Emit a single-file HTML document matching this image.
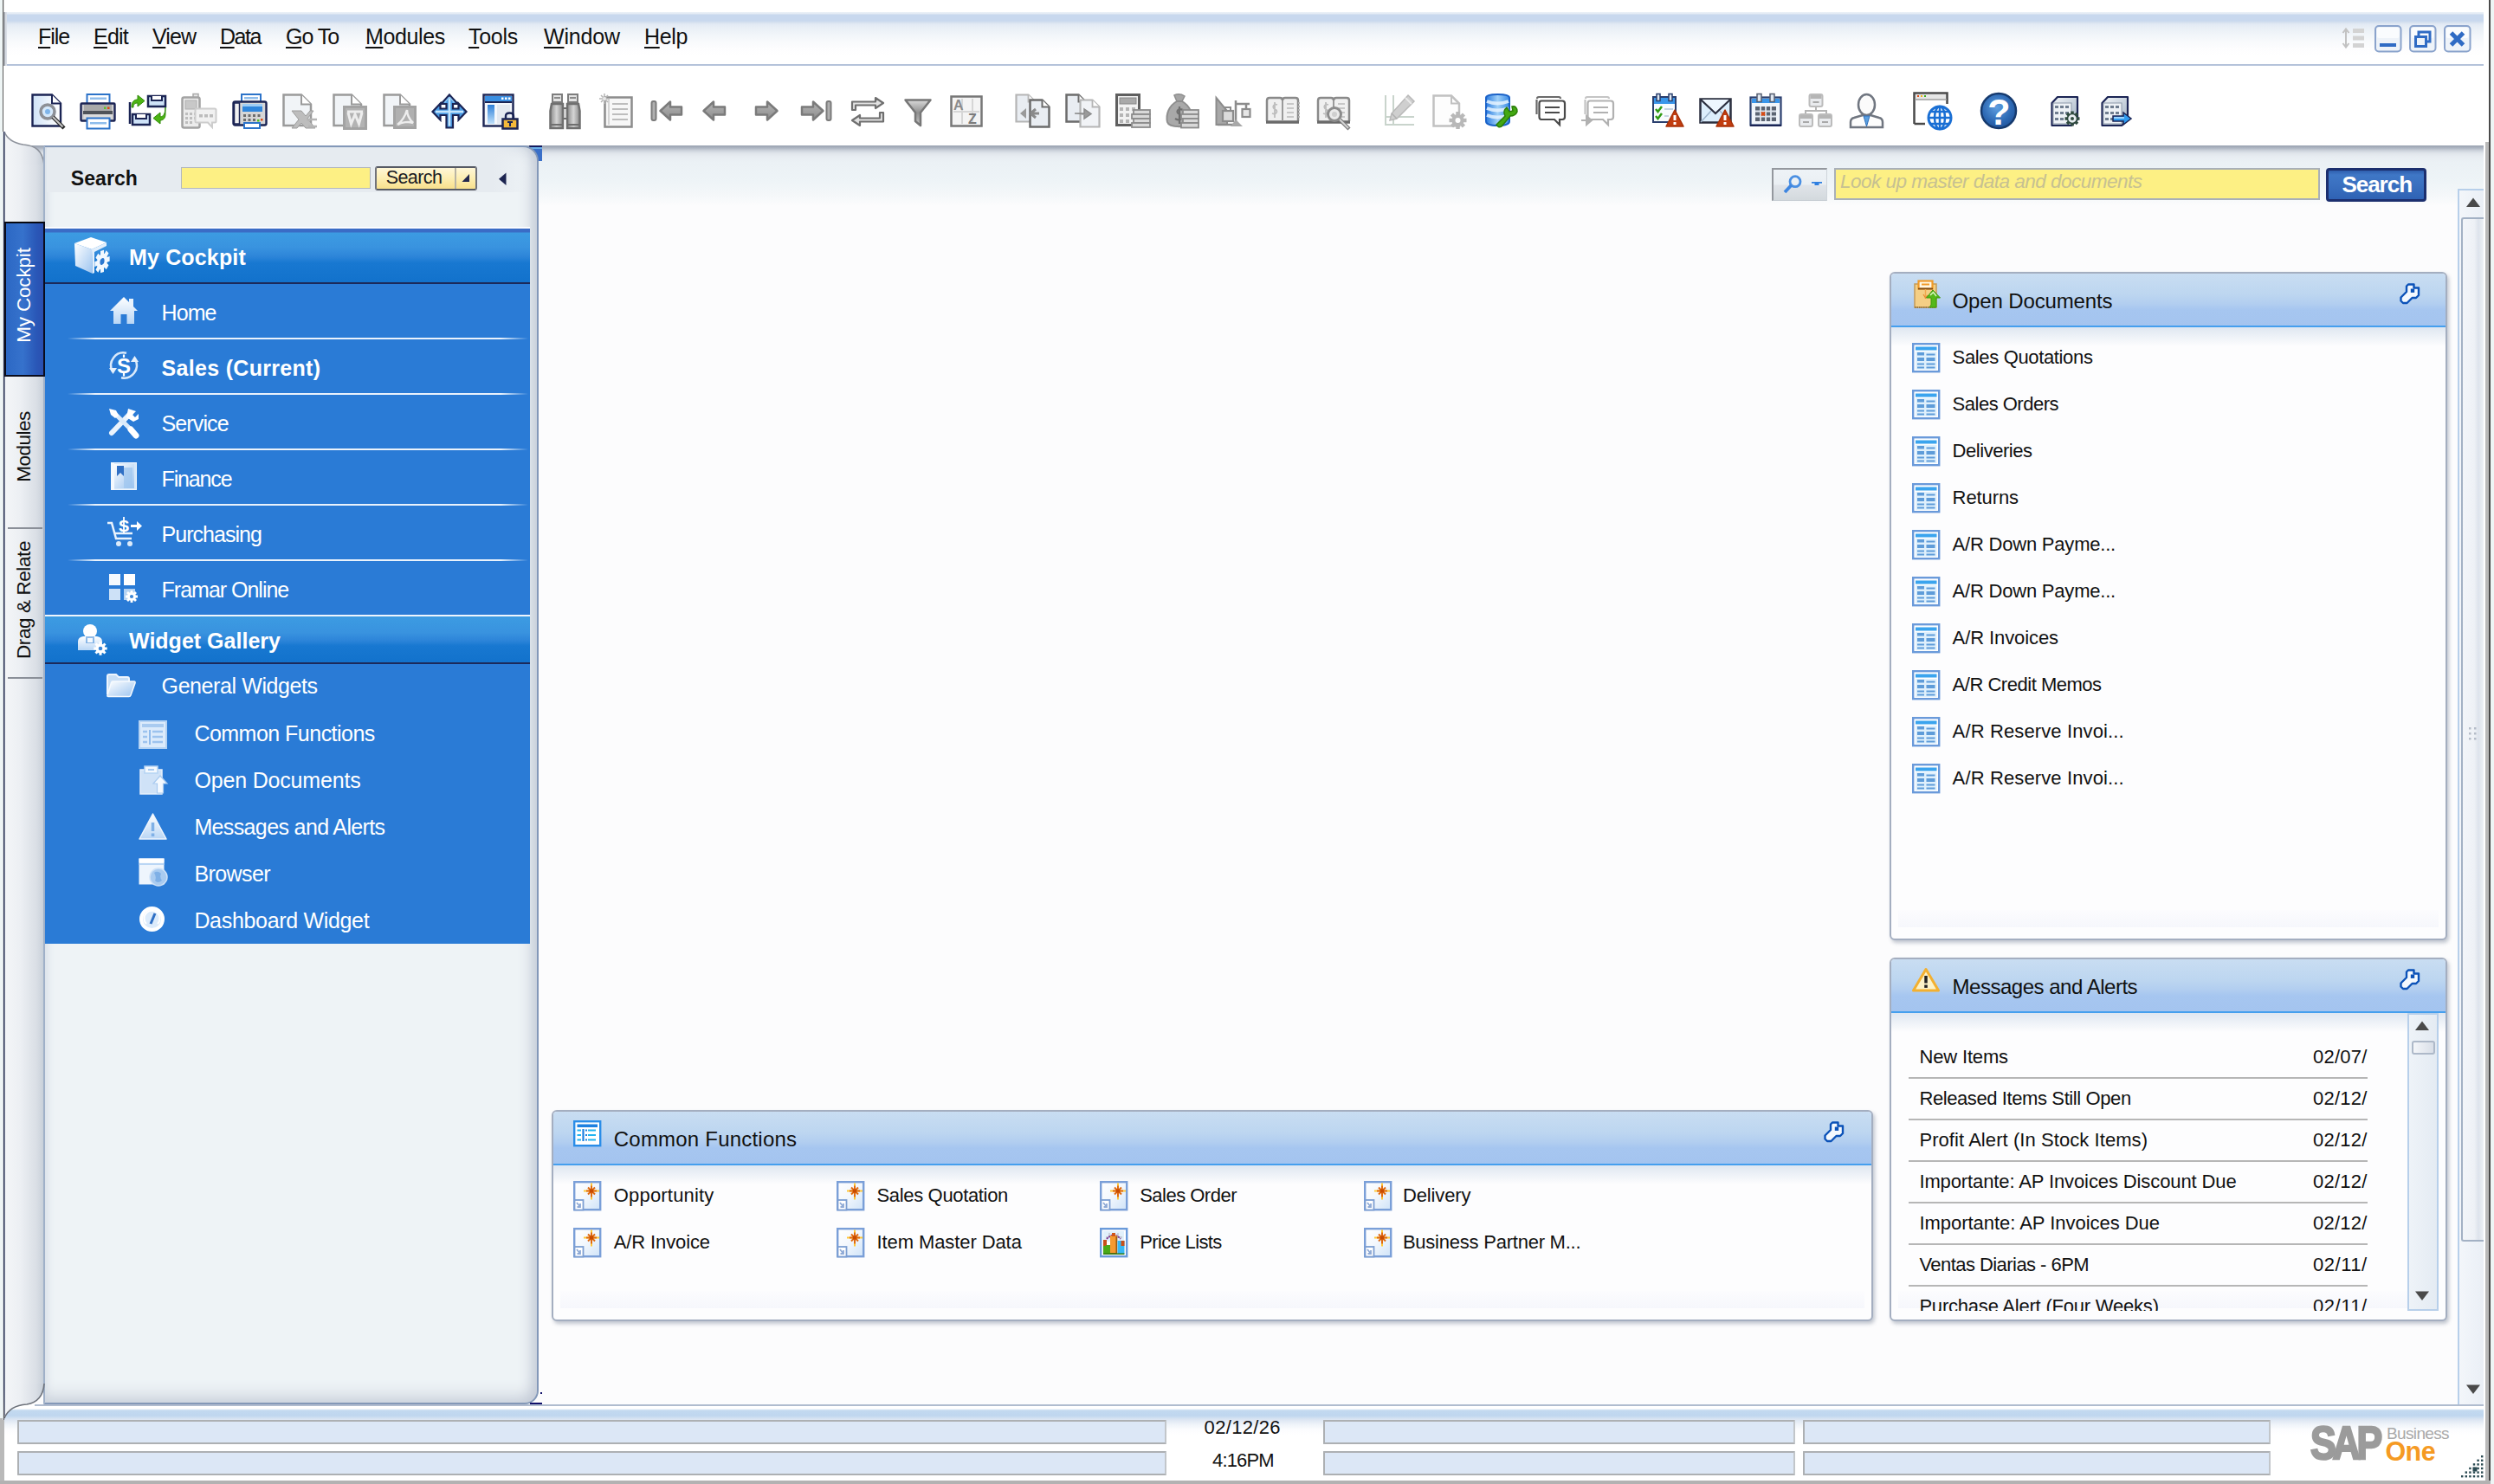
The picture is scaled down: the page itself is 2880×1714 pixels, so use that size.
<!DOCTYPE html>
<html><head><meta charset="utf-8"><title>SAP Business One</title>
<style>
html,body{margin:0;padding:0;}
body{width:2880px;height:1714px;overflow:hidden;background:#fff;position:relative;font-family:"Liberation Sans",sans-serif;}
.t{position:absolute;white-space:nowrap;}
svg{position:absolute;overflow:visible;}
u{text-decoration:underline;text-underline-offset:3px;text-decoration-thickness:2px;}
</style></head><body>
<div style="position:absolute;left:0px;top:14px;width:2880px;height:61px;background:linear-gradient(#eaf0f6 0px,#e2eaf4 2px,#c8d8ee 3px,#c8d8ee 10px,#d6e1ef 12px,#e3eaf4 14px,#e9eff6 18px,#f1f5f9 26px,#f8fafc 34px,#fdfdfe 42px,#fff 50px);"></div>
<div style="position:absolute;left:5px;top:74px;width:2863px;height:2px;background:#b5c3da;"></div>
<div style="position:absolute;left:0px;top:76px;width:2880px;height:92px;background:#fff;"></div>
<div style="position:absolute;left:4px;top:168px;width:2870px;height:1454px;background:#fcfcfd;"></div>
<div style="position:absolute;left:4px;top:168px;width:2864px;height:70px;background:linear-gradient(#98a1af 0px,#aeb6c3 3px,#cdd3dc 6px,#e0e5eb 9px,#e8edf2 13px,#ebf1f5 20px,#eef4f7 42px,#f4f7f9 56px,#fcfcfd 70px);"></div>
<div style="position:absolute;left:0px;top:0px;width:3px;height:1714px;background:#eef5f5;"></div>
<div style="position:absolute;left:4px;top:14px;width:2px;height:62px;background:#a2a6ad;"></div>
<div style="position:absolute;left:6px;top:14px;width:2px;height:62px;background:#d9dee6;"></div>
<div style="position:absolute;left:3px;top:0px;width:1px;height:153px;background:#5a5a5a;"></div>
<div style="position:absolute;left:4px;top:0px;width:1px;height:14px;background:#d8d8d8;"></div>
<div class="t" style="left:44px;top:25.5px;font-size:25px;line-height:32px;letter-spacing:-1.07px;color:#111;"><u>F</u>ile</div>
<div class="t" style="left:108px;top:25.5px;font-size:25px;line-height:32px;letter-spacing:-0.77px;color:#111;"><u>E</u>dit</div>
<div class="t" style="left:176px;top:25.5px;font-size:25px;line-height:32px;letter-spacing:-0.93px;color:#111;"><u>V</u>iew</div>
<div class="t" style="left:254px;top:25.5px;font-size:25px;line-height:32px;letter-spacing:-1.45px;color:#111;"><u>D</u>ata</div>
<div class="t" style="left:330px;top:25.5px;font-size:25px;line-height:32px;letter-spacing:-1.05px;color:#111;"><u>G</u>o To</div>
<div class="t" style="left:422px;top:25.5px;font-size:25px;line-height:32px;letter-spacing:-0.36px;color:#111;"><u>M</u>odules</div>
<div class="t" style="left:541px;top:25.5px;font-size:25px;line-height:32px;letter-spacing:-0.27px;color:#111;"><u>T</u>ools</div>
<div class="t" style="left:628px;top:25.5px;font-size:25px;line-height:32px;letter-spacing:-0.15px;color:#111;"><u>W</u>indow</div>
<div class="t" style="left:744px;top:25.5px;font-size:25px;line-height:32px;letter-spacing:-0.35px;color:#111;"><u>H</u>elp</div>
<div style="position:absolute;left:5px;top:188px;width:47px;height:1414px;background:linear-gradient(90deg,#f4f6f8 0%,#eceff3 40%,#d9dee5 80%,#c4ccd6 100%);"></div>
<svg width="0" height="0" style="position:absolute"><defs><linearGradient id="gCol" x1="0" y1="0" x2="1" y2="0"><stop offset="0" stop-color="#f4f6f8"/><stop offset=".4" stop-color="#eceff3"/><stop offset=".8" stop-color="#d9dee5"/><stop offset="1" stop-color="#c4ccd6"/></linearGradient></defs></svg>
<svg style="left:5px;top:150px" width="47" height="40" viewBox="0 0 47 40"><path d="M0 2 C3 10 9 15 22 17 C36 18 44 24 46 40 L0 40 Z" fill="url(#gCol)"/><path d="M0 2 C3 10 9 15 22 17 C36 18 44 24 46 40" fill="none" stroke="#8d929b" stroke-width="1.6"/></svg>
<div style="position:absolute;left:611px;top:168px;width:15px;height:18px;background:linear-gradient(#141a5e 0px,#141a5e 2px,#6ab0ea 2px,#6ab0ea 4px,#3a6fc8 4px);"></div>
<div style="position:absolute;left:50px;top:168px;width:572px;height:1454px;box-sizing:border-box;background:#eef3f6;border:2px solid #8398b8;border-left:2px solid #9fb0c8;border-radius:0 18px 16px 0;box-shadow:inset -14px 0 16px -8px #c3cad6, inset 0 -16px 18px -8px #ccd3dd, inset 0 12px 14px -6px #dfe5ec, inset 8px 0 10px -6px #dde3ea;"></div>
<div style="position:absolute;left:54px;top:171px;width:560px;height:51px;background:linear-gradient(90deg,#e6ebf0 0%,#e6ebf0 92%,rgba(230,235,240,0) 100%);border-radius:0 16px 0 0;"></div>
<div style="position:absolute;left:612px;top:1620px;width:14px;height:2px;background:#10106a;"></div>
<div style="position:absolute;left:624px;top:1608px;width:2px;height:2px;background:#10106a;"></div>
<div style="position:absolute;left:52px;top:264px;width:560px;height:826px;background:#2a7bd6;"></div>
<div style="position:absolute;left:52px;top:262px;width:560px;height:2px;background:#fbfcfe;"></div>
<div style="position:absolute;left:52px;top:264px;width:560px;height:64px;background:linear-gradient(#3a6cc6 0px,#3a6cc6 4px,#3c9be2 5px,#3993df 35%,#2d85d9 52%,#1878d1 64%,#1272cc 100%);border-bottom:2px solid #1c2a5a;box-sizing:border-box;"></div>
<div style="position:absolute;left:52px;top:710px;width:560px;height:2px;background:#eef5fd;"></div>
<div style="position:absolute;left:52px;top:712px;width:560px;height:55px;background:linear-gradient(#3c9be2 0px,#3993df 35%,#2d85d9 52%,#1878d1 64%,#1272cc 100%);border-bottom:2px solid #1c2a5a;box-sizing:border-box;"></div>
<div class="t " style="left:149.0px;top:281.0px;font-size:25px;line-height:32px;color:#fff;letter-spacing:0.16px;font-weight:bold;">My Cockpit</div>
<div class="t " style="left:149.0px;top:724.0px;font-size:25px;line-height:32px;color:#fff;letter-spacing:0.01px;font-weight:bold;">Widget Gallery</div>
<div class="t " style="left:186.6px;top:345.0px;font-size:25px;line-height:32px;color:#fff;letter-spacing:-0.95px;">Home</div>
<div style="position:absolute;left:78px;top:390px;width:532px;height:2px;background:linear-gradient(90deg,rgba(255,255,255,0) 0%,#e9f2fc 6%,#e9f2fc 94%,rgba(255,255,255,0) 100%);"></div>
<div class="t " style="left:186.6px;top:409.0px;font-size:25px;line-height:32px;color:#fff;letter-spacing:0.30px;font-weight:bold;">Sales (Current)</div>
<div style="position:absolute;left:78px;top:454px;width:532px;height:2px;background:linear-gradient(90deg,rgba(255,255,255,0) 0%,#e9f2fc 6%,#e9f2fc 94%,rgba(255,255,255,0) 100%);"></div>
<div class="t " style="left:186.6px;top:473.0px;font-size:25px;line-height:32px;color:#fff;letter-spacing:-0.90px;">Service</div>
<div style="position:absolute;left:78px;top:518px;width:532px;height:2px;background:linear-gradient(90deg,rgba(255,255,255,0) 0%,#e9f2fc 6%,#e9f2fc 94%,rgba(255,255,255,0) 100%);"></div>
<div class="t " style="left:186.6px;top:537.0px;font-size:25px;line-height:32px;color:#fff;letter-spacing:-1.16px;">Finance</div>
<div style="position:absolute;left:78px;top:582px;width:532px;height:2px;background:linear-gradient(90deg,rgba(255,255,255,0) 0%,#e9f2fc 6%,#e9f2fc 94%,rgba(255,255,255,0) 100%);"></div>
<div class="t " style="left:186.6px;top:601.0px;font-size:25px;line-height:32px;color:#fff;letter-spacing:-0.97px;">Purchasing</div>
<div style="position:absolute;left:78px;top:646px;width:532px;height:2px;background:linear-gradient(90deg,rgba(255,255,255,0) 0%,#e9f2fc 6%,#e9f2fc 94%,rgba(255,255,255,0) 100%);"></div>
<div class="t " style="left:186.6px;top:665.0px;font-size:25px;line-height:32px;color:#fff;letter-spacing:-1.01px;">Framar Online</div>
<div class="t " style="left:186.6px;top:776.0px;font-size:25px;line-height:32px;color:#fff;letter-spacing:-0.41px;">General Widgets</div>
<div class="t " style="left:224.4px;top:830.5px;font-size:25px;line-height:32px;color:#fff;letter-spacing:-0.52px;">Common Functions</div>
<div class="t " style="left:224.4px;top:884.5px;font-size:25px;line-height:32px;color:#fff;letter-spacing:-0.17px;">Open Documents</div>
<div class="t " style="left:224.4px;top:938.5px;font-size:25px;line-height:32px;color:#fff;letter-spacing:-0.63px;">Messages and Alerts</div>
<div class="t " style="left:224.4px;top:992.5px;font-size:25px;line-height:32px;color:#fff;letter-spacing:-0.58px;">Browser</div>
<div class="t " style="left:224.4px;top:1046.5px;font-size:25px;line-height:32px;color:#fff;letter-spacing:-0.32px;">Dashboard Widget</div>
<div class="t " style="left:81.8px;top:191.0px;font-size:23px;line-height:30px;color:#111;letter-spacing:0.08px;font-weight:bold;">Search</div>
<div style="position:absolute;left:209px;top:193px;width:219px;height:25px;background:#fdf084;border:1.500px solid #b3b8be;box-sizing:border-box;"></div>
<div style="position:absolute;left:433px;top:192px;width:118px;height:28px;background:linear-gradient(#fff7d8,#fdeeb2 50%,#f8e08c);border:2px solid #70727a;border-top-color:#565a64;border-bottom-color:#565a64;border-radius:3px;box-sizing:border-box;"></div>
<div style="position:absolute;left:525px;top:194px;width:2px;height:24px;background:#b9b4a4;"></div>
<div class="t " style="left:445.7px;top:190.5px;font-size:21.5px;line-height:28px;color:#1a1a22;letter-spacing:-0.59px;">Search</div>
<svg style="left:533px;top:200px" width="10" height="11"><path d="M9 1 L9 10 L0.500 10 Z" fill="#23284e"/></svg>
<svg style="left:575px;top:199px" width="10" height="16"><path d="M9.500 0.500 L9.500 15 L1 7.700 Z" fill="#1c2450"/></svg>
<div style="position:absolute;left:5px;top:256px;width:47px;height:179px;background:linear-gradient(90deg,#2c68c4,#3672cc 45%,#2a58b8 80%,#2a4fb0);border:2px solid #0a0c1c;border-top:2.500px solid #07080f;box-sizing:border-box;"></div>
<div class="t" style="left:28px;top:340.5px;width:0;height:0;"><div style="position:absolute;white-space:nowrap;transform:translate(-50%,-50%) rotate(-90deg);font-size:22.5px;line-height:26px;color:#fff;letter-spacing:-0.18px;">My Cockpit</div></div>
<div class="t" style="left:28px;top:516px;width:0;height:0;"><div style="position:absolute;white-space:nowrap;transform:translate(-50%,-50%) rotate(-90deg);font-size:22.5px;line-height:26px;color:#111;letter-spacing:-0.51px;">Modules</div></div>
<div class="t" style="left:28px;top:693.4px;width:0;height:0;"><div style="position:absolute;white-space:nowrap;transform:translate(-50%,-50%) rotate(-90deg);font-size:22.5px;line-height:26px;color:#111;letter-spacing:-0.41px;">Drag &amp; Relate</div></div>
<div style="position:absolute;left:9px;top:609px;width:40px;height:2px;background:#8a8f98;"></div>
<div style="position:absolute;left:9px;top:782px;width:40px;height:2px;background:#8a8f98;"></div>
<div style="position:absolute;left:2182px;top:314px;width:644px;height:772px;background:#fdfdfe;border:2px solid #a4aec0;border-radius:6px;box-sizing:border-box;box-shadow:2px 3px 4px rgba(120,130,150,.45);overflow:hidden;"><div style="position:absolute;left:0;top:0;right:0;height:62px;background:linear-gradient(#c9ddf2 0%,#bdd6f0 40%,#b2cef0 58%,#a6c6f0 70%,#a4c4ef 100%);border-bottom:2px solid #459fee;box-sizing:border-box;"></div><div style="position:absolute;left:0;top:62px;right:0;height:22px;background:linear-gradient(#dfe7f1,#fdfdfe);"></div><div style="position:absolute;left:8px;right:8px;bottom:13px;height:20px;background:linear-gradient(#fcfcfe,#f6f7fc);"></div></div>
<div class="t " style="left:2254.6px;top:332.0px;font-size:24px;line-height:31px;color:#111;letter-spacing:-0.14px;">Open Documents</div>
<div style="position:absolute;left:2182px;top:1106px;width:644px;height:420px;background:#fdfdfe;border:2px solid #a4aec0;border-radius:6px;box-sizing:border-box;box-shadow:2px 3px 4px rgba(120,130,150,.45);overflow:hidden;"><div style="position:absolute;left:0;top:0;right:0;height:62px;background:linear-gradient(#c9ddf2 0%,#bdd6f0 40%,#b2cef0 58%,#a6c6f0 70%,#a4c4ef 100%);border-bottom:2px solid #459fee;box-sizing:border-box;"></div><div style="position:absolute;left:0;top:62px;right:0;height:22px;background:linear-gradient(#dfe7f1,#fdfdfe);"></div><div style="position:absolute;left:8px;right:8px;bottom:13px;height:20px;background:linear-gradient(#fcfcfe,#f6f7fc);"></div></div>
<div class="t " style="left:2254.6px;top:1124.0px;font-size:24px;line-height:31px;color:#111;letter-spacing:-0.49px;">Messages and Alerts</div>
<div style="position:absolute;left:637px;top:1282px;width:1526px;height:244px;background:#fdfdfe;border:2px solid #a4aec0;border-radius:6px;box-sizing:border-box;box-shadow:2px 3px 4px rgba(120,130,150,.45);overflow:hidden;"><div style="position:absolute;left:0;top:0;right:0;height:62px;background:linear-gradient(#c9ddf2 0%,#bdd6f0 40%,#b2cef0 58%,#a6c6f0 70%,#a4c4ef 100%);border-bottom:2px solid #459fee;box-sizing:border-box;"></div><div style="position:absolute;left:0;top:62px;right:0;height:22px;background:linear-gradient(#dfe7f1,#fdfdfe);"></div><div style="position:absolute;left:8px;right:8px;bottom:13px;height:20px;background:linear-gradient(#fcfcfe,#f6f7fc);"></div></div>
<div class="t " style="left:708.8px;top:1300.0px;font-size:24px;line-height:31px;color:#111;letter-spacing:0.21px;">Common Functions</div>
<div class="t " style="left:2254.6px;top:397.5px;font-size:22px;line-height:29px;color:#111;letter-spacing:-0.35px;">Sales Quotations</div>
<div class="t " style="left:2254.6px;top:451.5px;font-size:22px;line-height:29px;color:#111;letter-spacing:-0.50px;">Sales Orders</div>
<div class="t " style="left:2254.6px;top:505.5px;font-size:22px;line-height:29px;color:#111;letter-spacing:-0.46px;">Deliveries</div>
<div class="t " style="left:2254.6px;top:559.5px;font-size:22px;line-height:29px;color:#111;letter-spacing:-0.09px;">Returns</div>
<div class="t " style="left:2254.6px;top:613.5px;font-size:22px;line-height:29px;color:#111;letter-spacing:-0.21px;">A/R Down Payme...</div>
<div class="t " style="left:2254.6px;top:667.5px;font-size:22px;line-height:29px;color:#111;letter-spacing:-0.21px;">A/R Down Payme...</div>
<div class="t " style="left:2254.6px;top:721.5px;font-size:22px;line-height:29px;color:#111;letter-spacing:-0.09px;">A/R Invoices</div>
<div class="t " style="left:2254.6px;top:775.5px;font-size:22px;line-height:29px;color:#111;letter-spacing:-0.48px;">A/R Credit Memos</div>
<div class="t " style="left:2254.6px;top:829.5px;font-size:22px;line-height:29px;color:#111;letter-spacing:0.13px;">A/R Reserve Invoi...</div>
<div class="t " style="left:2254.6px;top:883.5px;font-size:22px;line-height:29px;color:#111;letter-spacing:0.13px;">A/R Reserve Invoi...</div>
<div style="position:absolute;left:2184px;top:1170px;width:596px;height:344px;overflow:hidden;">
<div class="t" style="left:32.4px;top:36px;font-size:22px;line-height:30px;letter-spacing:-0.15px;color:#111;">New Items</div>
<div class="t" style="left:487px;top:36px;font-size:22px;line-height:30px;letter-spacing:0.26px;color:#111;">02/07/</div>
<div style="position:absolute;left:20px;top:74px;width:530px;height:2px;background:#b6b6b6;"></div>
<div class="t" style="left:32.4px;top:84px;font-size:22px;line-height:30px;letter-spacing:-0.40px;color:#111;">Released Items Still Open</div>
<div class="t" style="left:487px;top:84px;font-size:22px;line-height:30px;letter-spacing:0.26px;color:#111;">02/12/</div>
<div style="position:absolute;left:20px;top:122px;width:530px;height:2px;background:#b6b6b6;"></div>
<div class="t" style="left:32.4px;top:132px;font-size:22px;line-height:30px;letter-spacing:0.07px;color:#111;">Profit Alert (In Stock Items)</div>
<div class="t" style="left:487px;top:132px;font-size:22px;line-height:30px;letter-spacing:0.26px;color:#111;">02/12/</div>
<div style="position:absolute;left:20px;top:170px;width:530px;height:2px;background:#b6b6b6;"></div>
<div class="t" style="left:32.4px;top:180px;font-size:22px;line-height:30px;letter-spacing:-0.11px;color:#111;">Importante: AP Invoices Discount Due</div>
<div class="t" style="left:487px;top:180px;font-size:22px;line-height:30px;letter-spacing:0.26px;color:#111;">02/12/</div>
<div style="position:absolute;left:20px;top:218px;width:530px;height:2px;background:#b6b6b6;"></div>
<div class="t" style="left:32.4px;top:228px;font-size:22px;line-height:30px;letter-spacing:-0.03px;color:#111;">Importante: AP Invoices Due</div>
<div class="t" style="left:487px;top:228px;font-size:22px;line-height:30px;letter-spacing:0.26px;color:#111;">02/12/</div>
<div style="position:absolute;left:20px;top:266px;width:530px;height:2px;background:#b6b6b6;"></div>
<div class="t" style="left:32.4px;top:276px;font-size:22px;line-height:30px;letter-spacing:-0.55px;color:#111;">Ventas Diarias - 6PM</div>
<div class="t" style="left:487px;top:276px;font-size:22px;line-height:30px;letter-spacing:0.53px;color:#111;">02/11/</div>
<div style="position:absolute;left:20px;top:314px;width:530px;height:2px;background:#b6b6b6;"></div>
<div class="t" style="left:32.4px;top:324px;font-size:22px;line-height:30px;letter-spacing:-0.21px;color:#111;">Purchase Alert (Four Weeks)</div>
<div class="t" style="left:487px;top:324px;font-size:22px;line-height:30px;letter-spacing:0.53px;color:#111;">02/11/</div>
</div>
<div style="position:absolute;left:2780px;top:1170px;width:36px;height:344px;background:linear-gradient(90deg,#eef3f8,#e4ebf3);border:2px solid #b7cfea;box-sizing:border-box;"></div>
<div style="position:absolute;left:2785px;top:1202px;width:27px;height:16px;background:linear-gradient(90deg,#f4f6f9,#d9dfe8);border:2px solid #aeb9c9;border-radius:3px;box-sizing:border-box;"></div>
<svg style="left:2789px;top:1179px" width="16" height="12"><path d="M8 0.500 L16 11 L0 11 Z" fill="#4a4a4a"/></svg>
<svg style="left:2789px;top:1491px" width="16" height="12"><path d="M0 0.500 L16 0.500 L8 11 Z" fill="#4a4a4a"/></svg>
<div class="t " style="left:708.8px;top:1365.5px;font-size:22px;line-height:29px;color:#111;letter-spacing:0.18px;">Opportunity</div>
<div class="t " style="left:1012.5px;top:1365.5px;font-size:22px;line-height:29px;color:#111;letter-spacing:-0.34px;">Sales Quotation</div>
<div class="t " style="left:1316.2px;top:1365.5px;font-size:22px;line-height:29px;color:#111;letter-spacing:-0.51px;">Sales Order</div>
<div class="t " style="left:1619.9px;top:1365.5px;font-size:22px;line-height:29px;color:#111;letter-spacing:-0.12px;">Delivery</div>
<div class="t " style="left:708.8px;top:1419.5px;font-size:22px;line-height:29px;color:#111;letter-spacing:-0.12px;">A/R Invoice</div>
<div class="t " style="left:1012.5px;top:1419.5px;font-size:22px;line-height:29px;color:#111;letter-spacing:-0.09px;">Item Master Data</div>
<div class="t " style="left:1316.2px;top:1419.5px;font-size:22px;line-height:29px;color:#111;letter-spacing:-0.64px;">Price Lists</div>
<div class="t " style="left:1619.9px;top:1419.5px;font-size:22px;line-height:29px;color:#111;letter-spacing:-0.23px;">Business Partner M...</div>
<div style="position:absolute;left:2046px;top:194px;width:64px;height:38px;background:linear-gradient(#eef3f7 0%,#eaeff3 48%,#e0e4e9 52%,#d3d9dd 100%);border-top:2px solid #94989e;border-left:2px solid #94989e;border-right:1px solid #cfd5db;border-bottom:1px solid #c5cbd2;box-sizing:border-box;"></div>
<div style="position:absolute;left:2118px;top:194px;width:561px;height:37px;background:#fdf084;border:2px solid #a9b0b8;box-sizing:border-box;"></div>
<div class="t " style="left:2125.0px;top:194.5px;font-size:22.5px;line-height:29px;color:#c6c092;letter-spacing:-0.51px;font-style:italic;">Look up master data and documents</div>
<div style="position:absolute;left:2686px;top:194px;width:116px;height:39px;background:linear-gradient(#2f5fae 0,#3f77c6 5px,#3a70c0 50%,#2f62b4 100%);border:3px solid #1c2f6e;border-radius:4px;box-sizing:border-box;"></div>
<div class="t " style="left:2704.4px;top:196.0px;font-size:26px;line-height:34px;color:#fff;letter-spacing:-1.02px;font-weight:bold;">Search</div>
<div style="position:absolute;left:2838px;top:218px;width:30px;height:1404px;background:linear-gradient(90deg,#f3f6fa,#eaeff6);border-left:2px solid #b7cfea;border-top:2px solid #b7cfea;box-sizing:border-box;"></div>
<div style="position:absolute;left:2842px;top:251px;width:26px;height:1183px;background:linear-gradient(90deg,#f2f5f9,#eef1f6 55%,#dde3ec 75%,#eef1f6);border:2px solid #a3b1c4;border-right:0;border-radius:3px 0 0 3px;box-sizing:border-box;"></div>
<svg style="left:2848px;top:228px" width="16" height="12"><path d="M8 0.500 L16 11 L0 11 Z" fill="#4a4a4a"/></svg>
<svg style="left:2848px;top:1599px" width="16" height="12"><path d="M0 0.500 L16 0.500 L8 11 Z" fill="#4a4a4a"/></svg>
<div style="position:absolute;left:5px;top:1623px;width:2875px;height:87px;background:linear-gradient(#fff 0px,#fff 4px,#c3d9f0 6px,#bfd6ef 12px,#d9e4f2 16px,#eef3f9 22px,#fbfcfe 28px,#fff 34px);"></div>
<div style="position:absolute;left:40px;top:1622px;width:2828px;height:2px;background:#b0bccf;"></div>
<div style="position:absolute;left:20px;top:1640px;width:1327px;height:28px;background:#dce7f6;border:2px solid #adb0b3;border-right-color:#c2c6ca;border-radius:1px;box-sizing:border-box;"></div>
<div style="position:absolute;left:1528px;top:1640px;width:545px;height:28px;background:#dce7f6;border:2px solid #adb0b3;border-right-color:#c2c6ca;border-radius:1px;box-sizing:border-box;"></div>
<div style="position:absolute;left:2082px;top:1640px;width:540px;height:28px;background:#dce7f6;border:2px solid #adb0b3;border-right-color:#c2c6ca;border-radius:1px;box-sizing:border-box;"></div>
<div style="position:absolute;left:20px;top:1676px;width:1327px;height:28px;background:#dce7f6;border:2px solid #adb0b3;border-right-color:#c2c6ca;border-radius:1px;box-sizing:border-box;"></div>
<div style="position:absolute;left:1528px;top:1676px;width:545px;height:28px;background:#dce7f6;border:2px solid #adb0b3;border-right-color:#c2c6ca;border-radius:1px;box-sizing:border-box;"></div>
<div style="position:absolute;left:2082px;top:1676px;width:540px;height:28px;background:#dce7f6;border:2px solid #adb0b3;border-right-color:#c2c6ca;border-radius:1px;box-sizing:border-box;"></div>
<div class="t " style="left:1390.6px;top:1634.0px;font-size:22px;line-height:29px;color:#111;letter-spacing:0.32px;">02/12/26</div>
<div class="t " style="left:1400.0px;top:1671.5px;font-size:22px;line-height:29px;color:#111;letter-spacing:-0.85px;">4:16PM</div>
<div style="position:absolute;left:0px;top:1638px;width:5px;height:76px;background:#b9b9b9;"></div>
<svg width="0" height="0" style="position:absolute"><defs>
<linearGradient id="gPaper" x1="0" y1="0" x2="1" y2="0"><stop offset="0" stop-color="#cfe2f7"/><stop offset=".6" stop-color="#eef5fc"/><stop offset="1" stop-color="#fff"/></linearGradient>
<linearGradient id="gBlueV" x1="0" y1="0" x2="0" y2="1"><stop offset="0" stop-color="#2e7fd8"/><stop offset="1" stop-color="#bfe0fa"/></linearGradient>
<linearGradient id="gGreyV" x1="0" y1="0" x2="0" y2="1"><stop offset="0" stop-color="#d9d9d9"/><stop offset=".5" stop-color="#8f8f8f"/><stop offset="1" stop-color="#c5c5c5"/></linearGradient>
<linearGradient id="gGreyH" x1="0" y1="0" x2="1" y2="0"><stop offset="0" stop-color="#8a8a8a"/><stop offset=".5" stop-color="#d5d5d5"/><stop offset="1" stop-color="#8a8a8a"/></linearGradient>
<linearGradient id="gArrow" x1="0" y1="0" x2="0" y2="1"><stop offset="0" stop-color="#b5b5b5"/><stop offset="1" stop-color="#8c8c8c"/></linearGradient>
<radialGradient id="gHelp" cx=".45" cy=".4" r=".7"><stop offset="0" stop-color="#5f9fe0"/><stop offset=".6" stop-color="#2d69b4"/><stop offset="1" stop-color="#1c4c92"/></radialGradient>
<linearGradient id="gDb" x1="0" y1="0" x2="1" y2="0"><stop offset="0" stop-color="#2a7be0"/><stop offset=".5" stop-color="#9fd0f8"/><stop offset="1" stop-color="#3a8be6"/></linearGradient>
<linearGradient id="gGrid" x1="0" y1="0" x2="1" y2="1"><stop offset="0" stop-color="#f4f7fa"/><stop offset="1" stop-color="#9fb0c2"/></linearGradient>
</defs></svg>
<svg style="left:36px;top:108px" width="42" height="42" viewBox="0 0 42 42" ><path d="M1.5 1.5 H24 L34 11.5 V37.5 H1.5 Z" fill="url(#gPaper)" stroke="#1b2454" stroke-width="2.400"/>
<path d="M24 1.5 V11.5 H34" fill="#fff" stroke="#1b2454" stroke-width="2"/>
<circle cx="19" cy="21" r="8" fill="#d5e9fb" stroke="#8d9096" stroke-width="3.5"/><circle cx="19" cy="21" r="3" fill="#7fb5ea"/>
<path d="M25 27 L38 40" stroke="#2a2a2a" stroke-width="4.5"/><path d="M25 27 L36.5 38.5" stroke="#c8c8c8" stroke-width="2"/></svg>
<svg style="left:92px;top:108px" width="42" height="42" viewBox="0 0 42 42" ><rect x="8.5" y="1" width="26" height="13" fill="#fff" stroke="#2c73c9" stroke-width="2"/><rect x="12" y="4.5" width="19" height="2.5" fill="#8fbdec"/>
<rect x="1.5" y="11.5" width="39" height="20" rx="1" fill="#cfcfcf" stroke="#1b2454" stroke-width="2.400"/>
<rect x="5" y="13" width="32" height="7" fill="#a9a9a9"/><rect x="4" y="20" width="34" height="4" fill="#4f5359"/><rect x="5" y="24" width="32" height="5" fill="#dcdcdc"/>
<rect x="28" y="15.5" width="2.5" height="2.5" fill="#5fc22a"/><rect x="32" y="15.5" width="2.5" height="2.5" fill="#e04a10"/>
<rect x="8.5" y="28.5" width="26" height="12" fill="#fff" stroke="#2c73c9" stroke-width="2"/><rect x="12" y="33" width="19" height="2.5" fill="#8fbdec"/></svg>
<svg style="left:148px;top:108px" width="44" height="42" viewBox="0 0 44 42" ><path d="M23 3 h20 v12 h-20 Z" fill="#cfe3f8" stroke="#1b2454" stroke-width="2.5"/><path d="M27 3 v5 h12 v-5" fill="#fff" stroke="#1b2454" stroke-width="2"/><path d="M5 24 h20 v12 h-20 Z" fill="#cfe3f8" stroke="#1b2454" stroke-width="2.5"/><path d="M9 24 v5 h12 v-5" fill="#fff" stroke="#1b2454" stroke-width="2"/><path d="M2 35 V10" stroke="#1b2454" stroke-width="2.5" fill="none"/>
<path d="M4 16 C4 8 8 7 11 7 V2 L19 8.5 L11 15 V11 C8 11 6 12 6 16 Z" fill="#4db414" stroke="#2f8a08" stroke-width="1"/>
<path d="M43 16 C43 24 40 27 37 27 V22 L29 28.5 L37 35 V31 C40 31 43 29 43 24 Z" fill="#4db414" stroke="#2f8a08" stroke-width="1"/></svg>
<svg style="left:208px;top:108px" width="42" height="42" viewBox="0 0 42 42" ><rect x="15" y="0.5" width="6" height="6" fill="#e6e6e6" stroke="#a9a9a9" stroke-width="1.5"/>
<rect x="2.500" y="4.500" width="20" height="35" rx="2" fill="#ececec" stroke="#a3a3a3" stroke-width="2.500"/>
<rect x="6" y="8" width="13" height="10" fill="#c8c8c8" stroke="#b0b0b0"/>
<g fill="#bdbdbd"><rect x="6" y="22" width="3" height="3"/><rect x="11" y="22" width="3" height="3"/><rect x="16" y="22" width="3" height="3"/><rect x="6" y="27" width="3" height="3"/><rect x="11" y="27" width="3" height="3"/><rect x="16" y="27" width="3" height="3"/><rect x="6" y="32" width="3" height="3"/><rect x="11" y="32" width="3" height="3"/></g>
<path d="M19 17.500 H40 Q41.500 17.500 41.500 19 V32 Q41.500 33.500 40 33.500 H37 V39 L32 33.500 H19 Q17.500 33.500 17.500 32 V19 Q17.500 17.500 19 17.500 Z" fill="#f1f1f1" stroke="#cdcdcd" stroke-width="2"/>
<g fill="#bcbcbc"><rect x="22" y="24" width="4" height="3.500"/><rect x="28" y="24" width="4" height="3.500"/><rect x="34" y="24" width="4" height="3.500"/></g></svg>
<svg style="left:266px;top:108px" width="44" height="42" viewBox="0 0 44 42" ><rect x="13" y="1" width="22" height="10" fill="#fff" stroke="#2c73c9" stroke-width="2"/><rect x="16" y="4" width="16" height="2.5" fill="#8fbdec"/>
<rect x="3.5" y="9.500" width="38" height="27" rx="2" fill="#d6d6d6" stroke="#1b2454" stroke-width="2.400"/>
<rect x="4.500" y="11" width="6" height="24" fill="#f2f2f2" stroke="#1b2454" stroke-width="1.500"/>
<rect x="14" y="12" width="23" height="9" fill="#2f86dc"/><rect x="14" y="12" width="23" height="3" fill="#9fcdf5"/>
<g fill="#6c6c6c"><rect x="15" y="24" width="3" height="3"/><rect x="20.500" y="24" width="3" height="3"/><rect x="26" y="24" width="3" height="3"/><rect x="31.500" y="24" width="3" height="3"/><rect x="15" y="29" width="3" height="3"/><rect x="20.500" y="29" width="3" height="3"/><rect x="26" y="29" width="3" height="3"/></g>
<rect x="31" y="30" width="2.500" height="2.500" fill="#4fc020"/><rect x="35" y="29" width="2.500" height="2.500" fill="#e04a10"/>
<rect x="16" y="34" width="18" height="6" fill="#fff" stroke="#2c73c9" stroke-width="2"/></svg>
<svg style="left:326px;top:108px" width="42" height="42" viewBox="0 0 42 42" ><path d="M1.5 1.5 H22 L33 12.5 V37 H1.5 Z" fill="#f1f4f7" stroke="#9a9a9a" stroke-width="2.5"/><path d="M22 1.5 V12.5 H33" fill="#fff" stroke="#9a9a9a" stroke-width="2"/><path d="M11 20 H22 L27 26 L32 20 H36 L29 29 L38 40 H27 L22 34 L17 40 H11 L19 30 Z" fill="#bdbdbd" stroke="#9d9d9d" stroke-width="1"/><path d="M28 30 H40 M30 38 H40" stroke="#b5b5b5" stroke-width="2.500"/></svg>
<svg style="left:384px;top:108px" width="42" height="42" viewBox="0 0 42 42" ><path d="M1.5 1.5 H22 L33 12.5 V37 H1.5 Z" fill="#f1f4f7" stroke="#9a9a9a" stroke-width="2.5"/><path d="M22 1.5 V12.5 H33" fill="#fff" stroke="#9a9a9a" stroke-width="2"/><rect x="13.500" y="15.500" width="25" height="25" fill="#b3b3b3" stroke="#a3a3a3" stroke-width="3"/>
<path d="M17 21 H35 M18 22 L21.500 35 L26 24 L30.500 35 L34 22" fill="none" stroke="#ededed" stroke-width="3"/></svg>
<svg style="left:442px;top:108px" width="40" height="42" viewBox="0 0 40 42" ><path d="M1.5 1.5 H20 L31 12.5 V37 H1.5 Z" fill="#f1f4f7" stroke="#9a9a9a" stroke-width="2.5"/><path d="M20 1.5 V12.5 H31" fill="#fff" stroke="#9a9a9a" stroke-width="2"/><rect x="13.500" y="15.500" width="24" height="24" fill="#b0b0b0" stroke="#a3a3a3" stroke-width="3"/>
<path d="M28 19 C26 26 22 32 17 36 C22 33 30 32 35 34 C31 30 28 25 28 19 Z" fill="none" stroke="#ededed" stroke-width="2.500"/></svg>
<svg style="left:498px;top:108px" width="42" height="42" viewBox="0 0 42 42" ><path d="M21 1.500 L30.500 12 H25 V17.500 H31.500 V11.500 L40.500 21 L31.500 30.500 V25 H25 V39.500 H17.500 V25 H10.500 V30.500 L1.500 21 L10.500 11.500 V17.500 H17.500 V12 H11.500 Z" fill="#4b9be4" stroke="#1b2454" stroke-width="2.200" stroke-linejoin="miter"/>
<path d="M21 5 V37.500 M5 21 H37" stroke="#c6e5fb" stroke-width="2.500"/><path d="M21 4 L26.500 10.500 M21 4 L15.500 10.500" stroke="#8cc4f2" stroke-width="1.500"/></svg>
<svg style="left:556px;top:108px" width="44" height="42" viewBox="0 0 44 42" ><rect x="2.500" y="1.500" width="34" height="36" fill="#f4f7fb" stroke="#1b2454" stroke-width="2.400"/>
<rect x="4" y="3" width="31" height="6" fill="#3a8fe2"/><rect x="4" y="9" width="31" height="2" fill="#1b2454"/>
<g fill="#fff"><rect x="23" y="4.500" width="2.500" height="2.500"/><rect x="27" y="4.500" width="2.500" height="2.500"/><rect x="31" y="4.500" width="2.500" height="2.500"/></g>
<rect x="7" y="13" width="8" height="22" fill="url(#gBlueV)"/><rect x="18" y="13" width="15" height="22" fill="#e4e9f0"/>
<path d="M28 30 V26 Q28 22.500 32.500 22.500 Q37 22.500 37 26 V30" fill="none" stroke="#1b2454" stroke-width="2.400"/>
<rect x="24.500" y="29.500" width="17" height="11" fill="#f5b93a" stroke="#1b2454" stroke-width="2.500"/><path d="M30 33 H36 M33 33 V38" stroke="#1b2454" stroke-width="2"/></svg>
<svg style="left:634px;top:108px" width="38" height="42" viewBox="0 0 38 42" ><rect x="4" y="1" width="11" height="9" fill="#e3e3e3" stroke="#7d7d7d" stroke-width="2"/><rect x="22" y="1" width="11" height="9" fill="#e3e3e3" stroke="#7d7d7d" stroke-width="2"/>
<path d="M6 5 H13 M24 5 H31" stroke="#8a8a8a" stroke-width="2"/>
<path d="M3 12 H16 V40 H1.500 V20 Z" fill="url(#gGreyH)" stroke="#6f6f6f" stroke-width="2.500"/><path d="M21 12 H34 L35.500 20 V40 H21 Z" fill="url(#gGreyH)" stroke="#6f6f6f" stroke-width="2.500"/>
<rect x="16" y="17" width="5" height="12" fill="#d0d0d0" stroke="#6f6f6f" stroke-width="2"/><path d="M2 36 H16 M21 36 H35" stroke="#6f6f6f" stroke-width="2"/></svg>
<svg style="left:692px;top:108px" width="40" height="42" viewBox="0 0 40 42" ><rect x="6.500" y="4.500" width="31" height="34" fill="#f7f7f7" stroke="#8c8c8c" stroke-width="2.500"/>
<path d="M11 7 V36" stroke="#d5d5d5" stroke-width="2"/><path d="M15 12 H33 M15 18 H33 M15 24 H33 M15 30 H33" stroke="#bdbdbd" stroke-width="2"/>
<path d="M6 0 V12 M0 6 H12 M2 2 L10 10 M10 2 L2 10" stroke="#b5b5b5" stroke-width="1.500"/><circle cx="6" cy="6" r="2" fill="#e9e9e9"/></svg>
<svg style="left:751px;top:116px" width="40" height="24" viewBox="0 0 40 24" ><rect x="1.500" y="1" width="5" height="22" rx="2" fill="#b0b0b0" stroke="#7b7b7b" stroke-width="2"/><path d="M23 1.500 V7.500 H36 V16.500 H23 V22.500 L11.5 12 Z" fill="url(#gArrow)" stroke="#7b7b7b" stroke-width="2.500" stroke-linejoin="round"/></svg>
<svg style="left:811px;top:116px" width="30" height="24" viewBox="0 0 30 24" ><path d="M13 1.500 V7.500 H26 V16.500 H13 V22.500 L1.5 12 Z" fill="url(#gArrow)" stroke="#7b7b7b" stroke-width="2.500" stroke-linejoin="round"/></svg>
<svg style="left:872px;top:116px" width="30" height="24" viewBox="0 0 30 24" ><path d="M14 1.500 V7.500 H1 V16.500 H14 V22.500 L25.5 12 Z" fill="url(#gArrow)" stroke="#7b7b7b" stroke-width="2.500" stroke-linejoin="round"/></svg>
<svg style="left:925px;top:116px" width="38" height="24" viewBox="0 0 38 24" ><path d="M14 1.500 V7.500 H1 V16.500 H14 V22.500 L25.5 12 Z" fill="url(#gArrow)" stroke="#7b7b7b" stroke-width="2.500" stroke-linejoin="round"/><rect x="29.500" y="1" width="5" height="22" rx="2" fill="#b0b0b0" stroke="#7b7b7b" stroke-width="2"/></svg>
<svg style="left:981px;top:108px" width="42" height="42" viewBox="0 0 42 42" ><path d="M3 19 V9.500 H30 V5 L39 11 L30 17 V13.500 H7 V19 Z" fill="#e1e1e1" stroke="#6f6f6f" stroke-width="2.200" stroke-linejoin="round"/>
<path d="M39 22 V32.500 H12 V37 L3 31 L12 25 V28.500 H35 V22 Z" fill="#e1e1e1" stroke="#6f6f6f" stroke-width="2.200" stroke-linejoin="round"/></svg>
<svg style="left:1044px;top:114px" width="32" height="34" viewBox="0 0 32 34" ><path d="M1.500 1.500 H30.500 L19 16 V31 L13 26 V16 Z" fill="url(#gGreyV)" stroke="#777" stroke-width="2.500" stroke-linejoin="round"/></svg>
<svg style="left:1097px;top:110px" width="40" height="38" viewBox="0 0 40 38" ><rect x="1.500" y="1.500" width="35" height="34" fill="#f4f4f4" stroke="#777" stroke-width="2.500"/>
<path d="M4 19 H34 M14 4 V33 M26 4 V33" stroke="#d6d6d6" stroke-width="2"/>
<text x="4" y="17" font-family="Liberation Sans" font-weight="bold" font-size="16" fill="#8c8c8c">A</text><text x="21" y="33" font-family="Liberation Sans" font-weight="bold" font-size="16" fill="#7c7c7c">Z</text></svg>
<svg style="left:1172px;top:108px" width="42" height="42" viewBox="0 0 42 42" ><path d="M1.5 1.5 H15.5 L23.5 9.5 V32.5 H1.5 Z" fill="#e9edf2" stroke="#b5b5b5" stroke-width="2.2"/><path d="M15.5 1.5 V9.5 H23.5" fill="#fff" stroke="#b5b5b5" stroke-width="1.8"/><path d="M17.5 7.5 H31.5 L39.5 15.5 V38.5 H17.5 Z" fill="#e9edf2" stroke="#6c6c6c" stroke-width="2.5"/><path d="M31.5 7.5 V15.5 H39.5" fill="#fff" stroke="#6c6c6c" stroke-width="2.0"/><path d="M18 23 H28 M18 23 L24 18 M18 23 L24 28" stroke="#8a8a8a" stroke-width="3" fill="none"/><path d="M6 23 L13 17 V29 Z" fill="#9a9a9a"/></svg>
<svg style="left:1230px;top:108px" width="42" height="42" viewBox="0 0 42 42" ><path d="M1.5 1.5 H15.5 L23.5 9.5 V32.5 H1.5 Z" fill="#e9edf2" stroke="#6c6c6c" stroke-width="2.5"/><path d="M15.5 1.5 V9.5 H23.5" fill="#fff" stroke="#6c6c6c" stroke-width="2.0"/><path d="M17.5 7.5 H31.5 L39.5 15.5 V38.5 H17.5 Z" fill="#f1f3f6" stroke="#b5b5b5" stroke-width="2.2"/><path d="M31.5 7.5 V15.5 H39.5" fill="#fff" stroke="#b5b5b5" stroke-width="1.8"/><path d="M11 23 H22 V18 L30 23.500 L22 29 V25" fill="#9a9a9a" stroke="#8a8a8a" stroke-width="1.500"/></svg>
<svg style="left:1288px;top:106px" width="42" height="44" viewBox="0 0 42 44" ><rect x="1.500" y="3.500" width="26" height="35" fill="#f2f2f2" stroke="#5f5f5f" stroke-width="3"/>
<rect x="5" y="7" width="19" height="7" fill="#a9a9a9" stroke="#8a8a8a"/>
<g fill="#b5b5b5"><rect x="5" y="18" width="4" height="4"/><rect x="12" y="18" width="4" height="4"/><rect x="19" y="18" width="4" height="4"/><rect x="5" y="25" width="4" height="4"/><rect x="12" y="25" width="4" height="4"/><rect x="19" y="25" width="4" height="4"/><rect x="5" y="32" width="4" height="4"/><rect x="12" y="32" width="4" height="4"/></g>
<g fill="#d9d9d9" stroke="#8c8c8c" stroke-width="1.800"><rect x="21" y="21" width="19" height="5"/><rect x="19" y="26" width="21" height="5"/><rect x="21" y="31" width="19" height="5"/><rect x="19" y="36" width="21" height="5"/></g></svg>
<svg style="left:1344px;top:108px" width="42" height="42" viewBox="0 0 42 42" ><path d="M12 2 Q18 -1 24 3 L21 9 H15 Z" fill="#a5a5a5" stroke="#8e8e8e" stroke-width="1.500"/>
<path d="M15 9 H21 C30 14 34 24 32 33 C30 40 6 40 4 33 C2 24 6 14 15 9 Z" fill="#a9a9a9" stroke="#8e8e8e" stroke-width="2"/>
<path d="M18 15 V35 M22 19 C16 16 13 22 18 24 C24 26 20 33 13 29" stroke="#6f6f6f" stroke-width="2.200" fill="none"/>
<g fill="#d9d9d9" stroke="#8c8c8c" stroke-width="1.800"><rect x="22" y="19" width="18" height="5"/><rect x="20" y="24" width="20" height="5"/><rect x="22" y="29" width="18" height="5"/><rect x="20" y="34" width="20" height="5.500"/></g></svg>
<svg style="left:1403px;top:110px" width="42" height="38" viewBox="0 0 42 38" ><path d="M1.500 3 L14 18 V34 H1.500 Z" fill="#a8a8a8" stroke="#8c8c8c" stroke-width="2"/>
<rect x="9" y="18" width="12" height="12" fill="#dcdcdc" stroke="#8c8c8c" stroke-width="2.200"/><path d="M12 18 V14 H18 V18" fill="none" stroke="#8c8c8c" stroke-width="2"/>
<path d="M24 6 V34 H3 M24 10 H40 M36 10 V16" stroke="#8c8c8c" stroke-width="2.500" fill="none"/>
<rect x="31.500" y="16" width="9" height="9" fill="#e6e6e6" stroke="#8c8c8c" stroke-width="2.200"/><path d="M24 28 L32 36 H18 Z" fill="#a8a8a8"/></svg>
<svg style="left:1461px;top:110px" width="42" height="36" viewBox="0 0 42 36" ><path d="M2 30 V6 Q2 3 5 3 H17 Q20 3 20 6 Q20 3 23 3 H35 Q38 3 38 6 V30" fill="#f0f0f0" stroke="#8a8a8a" stroke-width="2.500"/>
<path d="M1 31 H39" stroke="#6a6a6a" stroke-width="3.500"/><path d="M20 6 V30" stroke="#9a9a9a" stroke-width="2"/>
<path d="M11 8 V26 M14 11 C9 9 8 15 11 16 C15 17 14 23 8 21" stroke="#bdbdbd" stroke-width="1.800" fill="none"/>
<path d="M25 10 H33 M25 15 H33 M25 20 H33 M25 25 H33" stroke="#c7c7c7" stroke-width="2"/><path d="M39 8 V28" stroke="#b0b0b0" stroke-width="2" stroke-dasharray="2 2"/></svg>
<svg style="left:1520px;top:110px" width="42" height="42" viewBox="0 0 42 42" ><path d="M2 30 V6 Q2 3 5 3 H17 Q20 3 20 6 Q20 3 23 3 H35 Q38 3 38 6 V30" fill="#f0f0f0" stroke="#8a8a8a" stroke-width="2.500"/>
<path d="M1 31 H39" stroke="#6a6a6a" stroke-width="3.500"/><path d="M20 6 V30" stroke="#9a9a9a" stroke-width="2"/>
<path d="M11 8 V26 M14 11 C9 9 8 15 11 16 C15 17 14 23 8 21" stroke="#bdbdbd" stroke-width="1.800" fill="none"/>
<path d="M25 10 H33 M25 15 H33 M25 20 H33 M25 25 H33" stroke="#c7c7c7" stroke-width="2"/><circle cx="21" cy="22" r="7.500" fill="#eaeaea" stroke="#8c8c8c" stroke-width="3"/><circle cx="21" cy="22" r="3" fill="#cfcfcf"/><path d="M27 28 L38 39" stroke="#7d7d7d" stroke-width="4.500"/><path d="M27 28 L37 38" stroke="#d5d5d5" stroke-width="1.800"/></svg>
<svg style="left:1597px;top:108px" width="40" height="40" viewBox="0 0 40 40" ><path d="M3 2 V36 H36 M3 27 H36 M12 2 V36" stroke="#c9d4cc" stroke-width="2" fill="none"/>
<path d="M29 2 L36 9 L16 29 L8 31 L10 23 Z" fill="#cfcfcf" stroke="#b9b9b9" stroke-width="1.500"/><path d="M10 23 L16 29" stroke="#b0b0b0" stroke-width="1.500"/><path d="M26 5 L33 12" stroke="#e9e9e9" stroke-width="2"/></svg>
<svg style="left:1654px;top:108px" width="42" height="42" viewBox="0 0 42 42" ><path d="M1.500 2.500 H22 L31 11.500 V37.500 H1.500 Z" fill="#fdfdfd" stroke="#c1c1c1" stroke-width="2.500"/><path d="M22 2.500 V11.500 H31" fill="none" stroke="#c1c1c1" stroke-width="2"/>
<g transform="translate(29.500,31)"><circle r="7" fill="#b8b8b8"/><g stroke="#b8b8b8" stroke-width="4.500"><path d="M0 -10 V10"/><path d="M-10 0 H10"/><path d="M-7 -7 L7 7"/><path d="M-7 7 L7 -7"/></g><circle r="3" fill="#fff"/></g></svg>
<svg style="left:1714px;top:108px" width="40" height="40" viewBox="0 0 40 40" ><path d="M2 5 Q2 1 15.500 1 Q29 1 29 5 V32 Q29 37 15.500 37 Q2 37 2 32 Z" fill="url(#gDb)" stroke="#1b62c8" stroke-width="2"/>
<path d="M3 9 Q15 14 28 9 M3 17 Q15 22 28 17 M3 25 Q15 30 28 25" stroke="#e6f3ff" stroke-width="4" fill="none" opacity=".85"/>
<path d="M14 36 L24 26 Q21 20 26 16 L29 21 L33 20 L32 15 Q38 14 38 21 Q36 26 30 26 L20 38 Q16 40 14 36 Z" fill="#43a812" stroke="#2b7d08" stroke-width="1.500"/></svg>
<svg style="left:1772px;top:110px" width="38" height="38" viewBox="0 0 38 38" ><path d="M3 4 Q3 2 5 2 H28 Q30 2 30 4" fill="none" stroke="#6a6a6a" stroke-width="2.200"/><path d="M2.500 5 V22" stroke="#6a6a6a" stroke-width="2.200"/>
<path d="M8 6.500 H32 Q35 6.500 35 9.500 V25 Q35 28 32 28 H29 V34 L23 28 H8 Q5.500 28 5.500 25 V9.500 Q5.500 6.500 8 6.500 Z" fill="#fff" stroke="#4a4a4a" stroke-width="2.200"/>
<path d="M12 14 H29 M12 20 H29" stroke="#4a4a4a" stroke-width="2.200"/></svg>
<svg style="left:1826px;top:110px" width="40" height="38" viewBox="0 0 40 38" ><g transform="translate(2,0)"><path d="M3 4 Q3 2 5 2 H28 Q30 2 30 4" fill="none" stroke="#c4c4c4" stroke-width="2.200"/><path d="M2.500 5 V22" stroke="#c4c4c4" stroke-width="2.200"/>
<path d="M8 6.500 H32 Q35 6.500 35 9.500 V25 Q35 28 32 28 H29 V34 L23 28 H8 Q5.500 28 5.500 25 V9.500 Q5.500 6.500 8 6.500 Z" fill="#fff" stroke="#b1b1b1" stroke-width="2.200"/>
<path d="M12 14 H29 M12 20 H29" stroke="#b1b1b1" stroke-width="2.200"/></g><path d="M0 29 H8 M6 24 L12 29 L6 34 Z" fill="#b1b1b1" stroke="#b1b1b1" stroke-width="2"/></svg>
<svg style="left:1907px;top:108px" width="40" height="40" viewBox="0 0 40 40" ><rect x="2" y="4" width="26" height="29" fill="#f8fbfe" stroke="#2a3f6e" stroke-width="2"/><rect x="3" y="5" width="24" height="7" fill="#3a96ea"/>
<rect x="6" y="0.500" width="4" height="8" fill="#dfe7f0" stroke="#2a3f6e" stroke-width="1.500"/><rect x="20" y="0.500" width="4" height="8" fill="#dfe7f0" stroke="#2a3f6e" stroke-width="1.500"/>
<path d="M5 18 L7.500 21 L12 15 M5 26 L7.500 29 L12 23" stroke="#2e9a12" stroke-width="2.500" fill="none"/><path d="M15 18 H25 M15 26 H20" stroke="#c6d3e2" stroke-width="2"/><path d="M27 19 L37 38 H17 Z" fill="#c23d10" stroke="#a83208" stroke-width="1.500" stroke-linejoin="round"/><path d="M27 25 V31" stroke="#fff" stroke-width="3"/><rect x="25.5" y="33" width="3" height="3" fill="#fff"/></svg>
<svg style="left:1962px;top:112px" width="42" height="36" viewBox="0 0 42 36" ><rect x="1.500" y="2.500" width="35" height="27" fill="#dceefc" stroke="#2b2f3f" stroke-width="2.500"/><path d="M2 3 L19 19 L36 3" fill="#eef7ff" stroke="#2b2f3f" stroke-width="2.200"/><path d="M2 29 L14 16 M36 29 L24 16" stroke="#9db4cc" stroke-width="1.500"/><path d="M30 15 L40 34 H20 Z" fill="#c23d10" stroke="#a83208" stroke-width="1.500" stroke-linejoin="round"/><path d="M30 21 V27" stroke="#fff" stroke-width="3"/><rect x="28.5" y="29" width="3" height="3" fill="#fff"/></svg>
<svg style="left:2020px;top:108px" width="40" height="40" viewBox="0 0 40 40" ><rect x="1.500" y="4.500" width="35" height="32" fill="#f1f5fa" stroke="#2a3f6e" stroke-width="2.200"/><rect x="3" y="6" width="32" height="5" fill="#3a96ea"/>
<rect x="9" y="0.500" width="5" height="9" fill="#dfe7f0" stroke="#555e70" stroke-width="1.500"/><rect x="24" y="0.500" width="5" height="9" fill="#dfe7f0" stroke="#555e70" stroke-width="1.500"/>
<rect x="7" y="15" width="24" height="17" fill="#5c6472"/><path d="M7 20.500 H31 M7 26.500 H31 M13 15 V32 M19 15 V32 M25 15 V32" stroke="#dfe5ee" stroke-width="1.800"/>
<path d="M14 21.500 L18 25.500 M18 21.500 L14 25.500" stroke="#e04a10" stroke-width="2"/><path d="M1 37 H37" stroke="#1b2454" stroke-width="2"/></svg>
<svg style="left:2077px;top:108px" width="41" height="42" viewBox="0 0 41 42" ><path d="M20 14 V20 M8 24 V20 H32 V24" fill="none" stroke="#b5b5b5" stroke-width="2"/><rect x="12.5" y="1" width="15" height="14" rx="2" fill="#e9ebee" stroke="#bcbcbc" stroke-width="2"/><rect x="13.5" y="2" width="13" height="4" fill="#b5b5b5"/><path d="M16.5 10 H23.5" stroke="#a9a9a9" stroke-width="2"/><rect x="1" y="24" width="15" height="14" rx="2" fill="#e9ebee" stroke="#bcbcbc" stroke-width="2"/><rect x="2" y="25" width="13" height="4" fill="#b5b5b5"/><path d="M5 33 H12" stroke="#a9a9a9" stroke-width="2"/><rect x="23" y="24" width="15" height="14" rx="2" fill="#e9ebee" stroke="#bcbcbc" stroke-width="2"/><rect x="24" y="25" width="13" height="4" fill="#b5b5b5"/><path d="M27 33 H34" stroke="#a9a9a9" stroke-width="2"/></svg>
<svg style="left:2135px;top:108px" width="42" height="42" viewBox="0 0 42 42" ><path d="M2 39 V33 Q2 29 6 28 L16 25 H25 L35 28 Q39 29 39 33 V39 Z" fill="#fdfdfd" stroke="#707680" stroke-width="2.500"/>
<ellipse cx="20.500" cy="13" rx="9.500" ry="12" fill="#fbfbfb" stroke="#707680" stroke-width="2.500"/>
<path d="M17 26 L20.500 38 L24 26 Z" fill="#5a9fe0" stroke="#2e6fba" stroke-width="1"/></svg>
<svg style="left:2209px;top:106px" width="47" height="46" viewBox="0 0 47 46" ><path d="M1.500 37 V1.500 H39.500 V14" fill="none" stroke="#4a4a4a" stroke-width="2.500"/><path d="M1.500 37 H14" stroke="#4a4a4a" stroke-width="2.500"/>
<rect x="3" y="3" width="35" height="5" fill="#e6e6e6"/><path d="M2 9 H39" stroke="#9a9a9a" stroke-width="1.500"/>
<rect x="5" y="4" width="2" height="2" fill="#e04a10"/><rect x="9" y="4" width="2" height="2" fill="#f0b020"/><rect x="13" y="4" width="2" height="2" fill="#3fb01a"/>
<circle cx="31" cy="30" r="13" fill="#fff" stroke="#1a6fd4" stroke-width="3"/>
<ellipse cx="31" cy="30" rx="6" ry="13" fill="none" stroke="#1a6fd4" stroke-width="2.500"/><path d="M18 30 H44 M31 17 V43 M20.500 23 H41.500 M20.500 37 H41.500" stroke="#1a6fd4" stroke-width="2.500"/></svg>
<svg style="left:2286px;top:106px" width="44" height="44" viewBox="0 0 44 44" ><circle cx="22" cy="22" r="20" fill="url(#gHelp)" stroke="#163a6e" stroke-width="2.500"/>
<text x="22.500" y="37.500" text-anchor="middle" font-family="Liberation Sans" font-weight="bold" font-size="43" fill="#fff">?</text></svg>
<svg style="left:2368px;top:110px" width="36" height="38" viewBox="0 0 36 38" ><path d="M1.500 9 L8 2 H31 V28 L24 35 H1.500 Z" fill="url(#gGrid)" stroke="#1b2454" stroke-width="2.200" stroke-linejoin="round"/>
<rect x="3" y="9" width="21" height="24" fill="#eef2f6" stroke="#8c98a8" stroke-width="1"/>
<g fill="#6f7d8f"><rect x="5" y="12" width="4" height="3"/><rect x="11" y="12" width="4" height="3"/><rect x="17" y="12" width="4" height="3"/><rect x="5" y="19" width="4" height="3"/><rect x="11" y="19" width="4" height="3"/><rect x="17" y="19" width="4" height="3"/><rect x="5" y="26" width="4" height="3"/><rect x="11" y="26" width="4" height="3"/></g><g transform="translate(25,27)"><g stroke="#2f4a3f" stroke-width="3.500"><path d="M0 -8.500 V8.500 M-8.500 0 H8.500 M-6 -6 L6 6 M-6 6 L6 -6"/></g><circle r="5.500" fill="#e9eef2" stroke="#2f4a3f" stroke-width="1.500"/><circle r="2" fill="#2f4a3f"/></g></svg>
<svg style="left:2426px;top:110px" width="38" height="38" viewBox="0 0 38 38" ><path d="M1.500 9 L8 2 H31 V28 L24 35 H1.500 Z" fill="url(#gGrid)" stroke="#1b2454" stroke-width="2.200" stroke-linejoin="round"/>
<rect x="3" y="9" width="21" height="24" fill="#eef2f6" stroke="#8c98a8" stroke-width="1"/>
<g fill="#6f7d8f"><rect x="5" y="12" width="4" height="3"/><rect x="11" y="12" width="4" height="3"/><rect x="17" y="12" width="4" height="3"/><rect x="5" y="19" width="4" height="3"/><rect x="11" y="19" width="4" height="3"/><rect x="17" y="19" width="4" height="3"/><rect x="5" y="26" width="4" height="3"/><rect x="11" y="26" width="4" height="3"/></g><path d="M14 24 H26 V20 L35 27 L26 34 V30 H14 Z" fill="#2f9bf0" stroke="#1b2454" stroke-width="1.500"/><path d="M15 26 H27" stroke="#bfe4ff" stroke-width="1.500"/></svg>
<svg style="left:2742px;top:29px" width="32" height="32" viewBox="0 0 32 32" ><rect x="1" y="1" width="29.500" height="29.500" rx="4" fill="#eef3f9" stroke="#8aa3cc" stroke-width="2"/><rect x="3" y="3" width="25.500" height="12" rx="2" fill="#fafcfe"/><rect x="6" y="21" width="19" height="4" fill="#2f6bc4"/></svg>
<svg style="left:2782px;top:29px" width="32" height="32" viewBox="0 0 32 32" ><rect x="1" y="1" width="29.500" height="29.500" rx="4" fill="#eef3f9" stroke="#8aa3cc" stroke-width="2"/><rect x="3" y="3" width="25.500" height="12" rx="2" fill="#fafcfe"/><path d="M11 12 V8 H24 V19 H20" fill="none" stroke="#2f6bc4" stroke-width="3"/><rect x="7.500" y="13.500" width="12" height="11" fill="none" stroke="#2f6bc4" stroke-width="3"/></svg>
<svg style="left:2822px;top:29px" width="32" height="32" viewBox="0 0 32 32" ><rect x="1" y="1" width="29.500" height="29.500" rx="4" fill="#eef3f9" stroke="#8aa3cc" stroke-width="2"/><rect x="3" y="3" width="25.500" height="12" rx="2" fill="#fafcfe"/><path d="M8.500 9 L22.500 23 M22.500 9 L8.500 23" stroke="#2f6bc4" stroke-width="5"/></svg>
<svg style="left:2705px;top:32px" width="26" height="24" viewBox="0 0 26 24" ><path d="M4 2 V22 M0.500 6 L4 1.500 L7.500 6 M0.500 18 L4 22.500 L7.500 18" stroke="#c2c2c2" stroke-width="2" fill="none"/><g fill="#d3d3d3"><rect x="12" y="1" width="13" height="5"/><rect x="12" y="9.500" width="13" height="5"/><rect x="12" y="18" width="13" height="5"/></g></svg>
<svg style="left:2056px;top:198px" width="52" height="30" viewBox="0 0 52 30" ><circle cx="17" cy="11.700" r="6" fill="none" stroke="#4a8fe2" stroke-width="2.800"/><path d="M12.500 16 L5 24" stroke="#3f86e0" stroke-width="3.800"/><path d="M36 12 H48 V13.800 H44.500 V16 H39.500 V13.800 H36 Z" fill="#2f7fe0"/></svg>
<svg width="0" height="0" style="position:absolute"><defs>
<linearGradient id="gW" x1="0" y1="0" x2="0" y2="1"><stop offset="0" stop-color="#ffffff"/><stop offset="1" stop-color="#b9d6f5"/></linearGradient>
<linearGradient id="gW2" x1="0" y1="0" x2="1" y2="1"><stop offset="0" stop-color="#ffffff"/><stop offset="1" stop-color="#9cc4f0"/></linearGradient>
<linearGradient id="gIc" x1="0" y1="0" x2="1" y2="1"><stop offset="0" stop-color="#ffffff"/><stop offset=".45" stop-color="#f4f8fd"/><stop offset="1" stop-color="#cfe3f8"/></linearGradient>
</defs></svg>
<svg style="left:85px;top:272px" width="44" height="46" viewBox="0 0 44 46" ><path d="M1 9 L20 2 L38 8 L21 16 Z" fill="#ffffff"/><path d="M1 9 L21 16 L22 44 L2 35 Z" fill="url(#gW2)"/><path d="M21 16 L38 8 L38 12 L24 19 L24 43 L22 44 Z" fill="#e3effb"/>
<g transform="translate(33,30) skewY(-20) scale(0.72,1.05)"><g stroke="#f2f8fe" stroke-width="5.500"><path d="M0 -12 V12 M-12 0 H12 M-8.500 -8.500 L8.500 8.500 M-8.500 8.500 L8.500 -8.500"/></g><circle r="8.500" fill="#f2f8fe"/><circle r="3.600" fill="#2c78d0"/></g></svg>
<svg style="left:127px;top:342px" width="33" height="33" viewBox="0 0 33 33" ><path d="M16 1 L32 17 H28 V32 H19.500 V21 H12.500 V32 H4 V17 H0 Z" fill="url(#gW)"/><rect x="22" y="3" width="5" height="9" fill="#e9f3fd"/></svg>
<svg style="left:124px;top:403px" width="38" height="38" viewBox="0 0 38 38" ><path d="M6 26 A14.500 14.500 0 0 1 22 4.800" fill="none" stroke="#d9e9fa" stroke-width="2.500"/><path d="M32 12 A14.500 14.500 0 0 1 16 33.200" fill="none" stroke="#d9e9fa" stroke-width="2.500"/>
<path d="M2 22 L6.500 29 L11 22 Z" fill="#e6f1fc"/><path d="M27 15 L31.500 8 L36 15 Z" fill="#e6f1fc"/>
<text x="19" y="27.500" text-anchor="middle" font-family="Liberation Sans" font-weight="bold" font-size="24" fill="#fff">S</text><path d="M19 6.500 V10 M19 28 V31.500" stroke="#fff" stroke-width="2.200"/></svg>
<svg style="left:124px;top:470px" width="38" height="35" viewBox="0 0 38 35" ><path d="M5 30 L27 7" stroke="#eaf3fc" stroke-width="6" stroke-linecap="round"/><path d="M24 2 L33 5 L29 9 L32 12 L36 8 L36 14 L30 17 L22 12 Z" fill="#ffffff"/>
<path d="M9 8 L31 30" stroke="#dcebfa" stroke-width="5" stroke-linecap="round"/><path d="M2 2 L10 4 L13 10 L9 13 L4 9 Z" fill="#ffffff"/><path d="M27 26 L33 33" stroke="#ffffff" stroke-width="7" stroke-linecap="round"/></svg>
<svg style="left:128px;top:534px" width="31" height="33" viewBox="0 0 31 33" ><rect x="0.500" y="0.500" width="29" height="31" fill="#d7e8f9" stroke="#eef5fd" stroke-width="1"/><rect x="3" y="2" width="24" height="28" fill="url(#gW2)"/>
<path d="M7 4 H15 V16 L11 12 L7 16 Z" fill="#2f6fc4"/><rect x="15" y="6" width="10" height="24" fill="#9dc4ee" opacity=".7"/><rect x="0" y="0" width="4" height="32" fill="#f4f9fe"/></svg>
<svg style="left:123px;top:596px" width="42" height="37" viewBox="0 0 42 37" ><path d="M1 8 H6 L11 26 H29" fill="none" stroke="#e9f3fd" stroke-width="2.500"/><path d="M9 20 H30" stroke="#e9f3fd" stroke-width="2.500"/>
<circle cx="14" cy="32" r="3" fill="#dcebfa"/><circle cx="27" cy="32" r="3" fill="#dcebfa"/>
<text x="20" y="18" text-anchor="middle" font-family="Liberation Sans" font-weight="bold" font-size="19" fill="#fff">S</text><path d="M20 1 V20" stroke="#fff" stroke-width="1.800"/>
<path d="M28 10 H35 V6 L41 11.500 L35 17 V13 H28 Z" fill="#fff"/></svg>
<svg style="left:126px;top:663px" width="35" height="34" viewBox="0 0 35 34" ><rect x="0" y="0" width="13" height="13" fill="#f4f9fe"/><rect x="17" y="0" width="13" height="13" fill="#ffffff"/><rect x="0" y="17" width="13" height="13" fill="#cde1f7"/><rect x="17" y="17" width="13" height="13" fill="#b4d2f2"/><g transform="translate(26,26)"><g stroke="#ffffff" stroke-width="2.8"><path d="M0 -7.0 V7.0 M-7.0 0 H7.0 M-5.0 -5.0 L5.0 5.0 M-5.0 5.0 L5.0 -5.0"/></g><circle r="5" fill="#ffffff"/><circle r="2.1" fill="#3d86d6"/></g></svg>
<svg style="left:90px;top:720px" width="35" height="38" viewBox="0 0 35 38" ><circle cx="14" cy="9" r="8" fill="#ffffff"/><path d="M0 31 V21 Q0 16 6 15 H22 Q28 16 28 21 V31 Z" fill="url(#gW)"/><rect x="9" y="15" width="10" height="8" fill="#3d86d6" opacity=".55"/><rect x="11" y="17" width="6" height="5" fill="#f4f9fe"/><g transform="translate(26,29)"><g stroke="#ffffff" stroke-width="3.0"><path d="M0 -7.7 V7.7 M-7.7 0 H7.7 M-5.5 -5.5 L5.5 5.5 M-5.5 5.5 L5.5 -5.5"/></g><circle r="5.5" fill="#ffffff"/><circle r="2.3" fill="#3d86d6"/></g></svg>
<svg style="left:123px;top:778px" width="34" height="28" viewBox="0 0 34 28" ><path d="M1 24 V3 Q1 1 3 1 H11 L14 4 H24 Q26 4 26 6 V9" fill="#c9dff6" stroke="#eef5fd" stroke-width="2"/><path d="M7 9 H32 Q33.500 9 33 11 L28 25 Q27.500 26.500 26 26.500 H2 Q0.500 26.500 1 25 L5.500 10.500 Q6 9 7 9 Z" fill="url(#gW2)" stroke="#f6fafe" stroke-width="1.500"/></svg>
<svg style="left:160px;top:832px" width="33" height="33" viewBox="0 0 33 33" ><rect x="1" y="1" width="31" height="31" fill="#dcebfb" stroke="#b5d3f3" stroke-width="2"/><rect x="4" y="4" width="25" height="4" fill="#a9cbf0"/>
<path d="M5 13 H10 M5 19 H10 M5 25 H10 M16 13 H28 M16 19 H28 M16 25 H28" stroke="#9cc3ee" stroke-width="2.500"/><path d="M13 11 V28" stroke="#8fbbec" stroke-width="2"/></svg>
<svg style="left:161px;top:884px" width="33" height="34" viewBox="0 0 33 34" ><rect x="1" y="5" width="25" height="28" fill="#cfe2f7" stroke="#e6f0fb" stroke-width="1.500"/><rect x="6" y="1" width="15" height="8" fill="#f4f9fe" stroke="#b5d3f3" stroke-width="1.500"/><path d="M10 5 H17" stroke="#a9cbf0" stroke-width="2"/>
<path d="M24 12 L32 21 H27.500 V32 H20.500 V21 H16 Z" fill="#f4f9fe" stroke="#a9cbf0" stroke-width="1.200"/></svg>
<svg style="left:160px;top:939px" width="33" height="32" viewBox="0 0 33 32" ><path d="M16.500 1 L32 30 H1 Z" fill="url(#gW)" stroke="#eef5fd" stroke-width="1.500" stroke-linejoin="round"/><path d="M16.500 11 V21" stroke="#7fb0e6" stroke-width="3.500"/><rect x="14.700" y="23.500" width="3.600" height="3.600" fill="#7fb0e6"/></svg>
<svg style="left:160px;top:991px" width="34" height="34" viewBox="0 0 34 34" ><rect x="0.500" y="0.500" width="29" height="30" fill="#eef5fd"/><rect x="0.500" y="0.500" width="29" height="5" fill="#ffffff"/><path d="M0 7 H30" stroke="#a9cbf0" stroke-width="1.500"/>
<circle cx="23" cy="22" r="10" fill="#a9cbf0" stroke="#cfe2f7" stroke-width="1.500"/><path d="M18 17 Q22 14 26 18 Q24 22 27 26 Q22 30 19 26 Q21 22 18 17 Z" fill="#7fb0e6"/></svg>
<svg style="left:161px;top:1047px" width="30" height="30" viewBox="0 0 30 30" ><circle cx="14.500" cy="14.500" r="12.500" fill="#dcebfb" stroke="#ffffff" stroke-width="4"/><path d="M8 20 A9 9 0 1 1 21 20" fill="none" stroke="#fff" stroke-width="2"/><path d="M13 20 L18 8" stroke="#2f6fc4" stroke-width="3"/></svg>
<svg style="left:2208px;top:396px" width="33" height="35" viewBox="0 0 33 35" ><rect x="1.200" y="1.200" width="30" height="32" fill="#fff" stroke="#6a9ada" stroke-width="2.400"/>
<rect x="4" y="4.500" width="24.500" height="4" fill="#3aa4ee"/><rect x="4" y="10" width="24.500" height="21" fill="#dff0fc"/>
<g fill="#5e9cd9"><rect x="6" y="11" width="8" height="3.500"/><rect x="16.500" y="12.500" width="10" height="2"/><rect x="6" y="17" width="8" height="4"/><rect x="16.500" y="17" width="10" height="4"/><rect x="6" y="23.500" width="8" height="2"/><rect x="16.500" y="23.500" width="10" height="2"/><rect x="6" y="27.500" width="8" height="2"/><rect x="16.500" y="27.500" width="10" height="2"/></g></svg>
<svg style="left:2208px;top:450px" width="33" height="35" viewBox="0 0 33 35" ><rect x="1.200" y="1.200" width="30" height="32" fill="#fff" stroke="#6a9ada" stroke-width="2.400"/>
<rect x="4" y="4.500" width="24.500" height="4" fill="#3aa4ee"/><rect x="4" y="10" width="24.500" height="21" fill="#dff0fc"/>
<g fill="#5e9cd9"><rect x="6" y="11" width="8" height="3.500"/><rect x="16.500" y="12.500" width="10" height="2"/><rect x="6" y="17" width="8" height="4"/><rect x="16.500" y="17" width="10" height="4"/><rect x="6" y="23.500" width="8" height="2"/><rect x="16.500" y="23.500" width="10" height="2"/><rect x="6" y="27.500" width="8" height="2"/><rect x="16.500" y="27.500" width="10" height="2"/></g></svg>
<svg style="left:2208px;top:504px" width="33" height="35" viewBox="0 0 33 35" ><rect x="1.200" y="1.200" width="30" height="32" fill="#fff" stroke="#6a9ada" stroke-width="2.400"/>
<rect x="4" y="4.500" width="24.500" height="4" fill="#3aa4ee"/><rect x="4" y="10" width="24.500" height="21" fill="#dff0fc"/>
<g fill="#5e9cd9"><rect x="6" y="11" width="8" height="3.500"/><rect x="16.500" y="12.500" width="10" height="2"/><rect x="6" y="17" width="8" height="4"/><rect x="16.500" y="17" width="10" height="4"/><rect x="6" y="23.500" width="8" height="2"/><rect x="16.500" y="23.500" width="10" height="2"/><rect x="6" y="27.500" width="8" height="2"/><rect x="16.500" y="27.500" width="10" height="2"/></g></svg>
<svg style="left:2208px;top:558px" width="33" height="35" viewBox="0 0 33 35" ><rect x="1.200" y="1.200" width="30" height="32" fill="#fff" stroke="#6a9ada" stroke-width="2.400"/>
<rect x="4" y="4.500" width="24.500" height="4" fill="#3aa4ee"/><rect x="4" y="10" width="24.500" height="21" fill="#dff0fc"/>
<g fill="#5e9cd9"><rect x="6" y="11" width="8" height="3.500"/><rect x="16.500" y="12.500" width="10" height="2"/><rect x="6" y="17" width="8" height="4"/><rect x="16.500" y="17" width="10" height="4"/><rect x="6" y="23.500" width="8" height="2"/><rect x="16.500" y="23.500" width="10" height="2"/><rect x="6" y="27.500" width="8" height="2"/><rect x="16.500" y="27.500" width="10" height="2"/></g></svg>
<svg style="left:2208px;top:612px" width="33" height="35" viewBox="0 0 33 35" ><rect x="1.200" y="1.200" width="30" height="32" fill="#fff" stroke="#6a9ada" stroke-width="2.400"/>
<rect x="4" y="4.500" width="24.500" height="4" fill="#3aa4ee"/><rect x="4" y="10" width="24.500" height="21" fill="#dff0fc"/>
<g fill="#5e9cd9"><rect x="6" y="11" width="8" height="3.500"/><rect x="16.500" y="12.500" width="10" height="2"/><rect x="6" y="17" width="8" height="4"/><rect x="16.500" y="17" width="10" height="4"/><rect x="6" y="23.500" width="8" height="2"/><rect x="16.500" y="23.500" width="10" height="2"/><rect x="6" y="27.500" width="8" height="2"/><rect x="16.500" y="27.500" width="10" height="2"/></g></svg>
<svg style="left:2208px;top:666px" width="33" height="35" viewBox="0 0 33 35" ><rect x="1.200" y="1.200" width="30" height="32" fill="#fff" stroke="#6a9ada" stroke-width="2.400"/>
<rect x="4" y="4.500" width="24.500" height="4" fill="#3aa4ee"/><rect x="4" y="10" width="24.500" height="21" fill="#dff0fc"/>
<g fill="#5e9cd9"><rect x="6" y="11" width="8" height="3.500"/><rect x="16.500" y="12.500" width="10" height="2"/><rect x="6" y="17" width="8" height="4"/><rect x="16.500" y="17" width="10" height="4"/><rect x="6" y="23.500" width="8" height="2"/><rect x="16.500" y="23.500" width="10" height="2"/><rect x="6" y="27.500" width="8" height="2"/><rect x="16.500" y="27.500" width="10" height="2"/></g></svg>
<svg style="left:2208px;top:720px" width="33" height="35" viewBox="0 0 33 35" ><rect x="1.200" y="1.200" width="30" height="32" fill="#fff" stroke="#6a9ada" stroke-width="2.400"/>
<rect x="4" y="4.500" width="24.500" height="4" fill="#3aa4ee"/><rect x="4" y="10" width="24.500" height="21" fill="#dff0fc"/>
<g fill="#5e9cd9"><rect x="6" y="11" width="8" height="3.500"/><rect x="16.500" y="12.500" width="10" height="2"/><rect x="6" y="17" width="8" height="4"/><rect x="16.500" y="17" width="10" height="4"/><rect x="6" y="23.500" width="8" height="2"/><rect x="16.500" y="23.500" width="10" height="2"/><rect x="6" y="27.500" width="8" height="2"/><rect x="16.500" y="27.500" width="10" height="2"/></g></svg>
<svg style="left:2208px;top:774px" width="33" height="35" viewBox="0 0 33 35" ><rect x="1.200" y="1.200" width="30" height="32" fill="#fff" stroke="#6a9ada" stroke-width="2.400"/>
<rect x="4" y="4.500" width="24.500" height="4" fill="#3aa4ee"/><rect x="4" y="10" width="24.500" height="21" fill="#dff0fc"/>
<g fill="#5e9cd9"><rect x="6" y="11" width="8" height="3.500"/><rect x="16.500" y="12.500" width="10" height="2"/><rect x="6" y="17" width="8" height="4"/><rect x="16.500" y="17" width="10" height="4"/><rect x="6" y="23.500" width="8" height="2"/><rect x="16.500" y="23.500" width="10" height="2"/><rect x="6" y="27.500" width="8" height="2"/><rect x="16.500" y="27.500" width="10" height="2"/></g></svg>
<svg style="left:2208px;top:828px" width="33" height="35" viewBox="0 0 33 35" ><rect x="1.200" y="1.200" width="30" height="32" fill="#fff" stroke="#6a9ada" stroke-width="2.400"/>
<rect x="4" y="4.500" width="24.500" height="4" fill="#3aa4ee"/><rect x="4" y="10" width="24.500" height="21" fill="#dff0fc"/>
<g fill="#5e9cd9"><rect x="6" y="11" width="8" height="3.500"/><rect x="16.500" y="12.500" width="10" height="2"/><rect x="6" y="17" width="8" height="4"/><rect x="16.500" y="17" width="10" height="4"/><rect x="6" y="23.500" width="8" height="2"/><rect x="16.500" y="23.500" width="10" height="2"/><rect x="6" y="27.500" width="8" height="2"/><rect x="16.500" y="27.500" width="10" height="2"/></g></svg>
<svg style="left:2208px;top:882px" width="33" height="35" viewBox="0 0 33 35" ><rect x="1.200" y="1.200" width="30" height="32" fill="#fff" stroke="#6a9ada" stroke-width="2.400"/>
<rect x="4" y="4.500" width="24.500" height="4" fill="#3aa4ee"/><rect x="4" y="10" width="24.500" height="21" fill="#dff0fc"/>
<g fill="#5e9cd9"><rect x="6" y="11" width="8" height="3.500"/><rect x="16.500" y="12.500" width="10" height="2"/><rect x="6" y="17" width="8" height="4"/><rect x="16.500" y="17" width="10" height="4"/><rect x="6" y="23.500" width="8" height="2"/><rect x="16.500" y="23.500" width="10" height="2"/><rect x="6" y="27.500" width="8" height="2"/><rect x="16.500" y="27.500" width="10" height="2"/></g></svg>
<svg style="left:662.0px;top:1364px" width="33" height="35" viewBox="0 0 33 35" ><rect x="1.200" y="1.200" width="30" height="32" fill="url(#gIc)" stroke="#7a9fd8" stroke-width="2.400"/>
<g transform="translate(21,11.500)"><path d="M0 -9 V10 M-9 0 H9" stroke="#ffc838" stroke-width="2"/><path d="M0 -6 V7 M-6 0 H6 M-4 -4 L4 4 M-4 4 L4 -4" stroke="#e06a10" stroke-width="2"/><rect x="-2" y="-2" width="4" height="4" fill="#c74a00"/></g>
<rect x="1.500" y="22" width="10" height="11.500" fill="#fff" stroke="#7d9fd2" stroke-width="1.800"/><path d="M4 25 L8 30 M8 26 V30 H4.500" stroke="#8faad6" stroke-width="1.800" fill="none"/></svg>
<svg style="left:662.0px;top:1418px" width="33" height="35" viewBox="0 0 33 35" ><rect x="1.200" y="1.200" width="30" height="32" fill="url(#gIc)" stroke="#7a9fd8" stroke-width="2.400"/>
<g transform="translate(21,11.500)"><path d="M0 -9 V10 M-9 0 H9" stroke="#ffc838" stroke-width="2"/><path d="M0 -6 V7 M-6 0 H6 M-4 -4 L4 4 M-4 4 L4 -4" stroke="#e06a10" stroke-width="2"/><rect x="-2" y="-2" width="4" height="4" fill="#c74a00"/></g>
<rect x="1.500" y="22" width="10" height="11.500" fill="#fff" stroke="#7d9fd2" stroke-width="1.800"/><path d="M4 25 L8 30 M8 26 V30 H4.500" stroke="#8faad6" stroke-width="1.800" fill="none"/></svg>
<svg style="left:966.2px;top:1364px" width="33" height="35" viewBox="0 0 33 35" ><rect x="1.200" y="1.200" width="30" height="32" fill="url(#gIc)" stroke="#7a9fd8" stroke-width="2.400"/>
<g transform="translate(21,11.500)"><path d="M0 -9 V10 M-9 0 H9" stroke="#ffc838" stroke-width="2"/><path d="M0 -6 V7 M-6 0 H6 M-4 -4 L4 4 M-4 4 L4 -4" stroke="#e06a10" stroke-width="2"/><rect x="-2" y="-2" width="4" height="4" fill="#c74a00"/></g>
<rect x="1.500" y="22" width="10" height="11.500" fill="#fff" stroke="#7d9fd2" stroke-width="1.800"/><path d="M4 25 L8 30 M8 26 V30 H4.500" stroke="#8faad6" stroke-width="1.800" fill="none"/></svg>
<svg style="left:966.2px;top:1418px" width="33" height="35" viewBox="0 0 33 35" ><rect x="1.200" y="1.200" width="30" height="32" fill="url(#gIc)" stroke="#7a9fd8" stroke-width="2.400"/>
<g transform="translate(21,11.500)"><path d="M0 -9 V10 M-9 0 H9" stroke="#ffc838" stroke-width="2"/><path d="M0 -6 V7 M-6 0 H6 M-4 -4 L4 4 M-4 4 L4 -4" stroke="#e06a10" stroke-width="2"/><rect x="-2" y="-2" width="4" height="4" fill="#c74a00"/></g>
<rect x="1.500" y="22" width="10" height="11.500" fill="#fff" stroke="#7d9fd2" stroke-width="1.800"/><path d="M4 25 L8 30 M8 26 V30 H4.500" stroke="#8faad6" stroke-width="1.800" fill="none"/></svg>
<svg style="left:1270.4px;top:1364px" width="33" height="35" viewBox="0 0 33 35" ><rect x="1.200" y="1.200" width="30" height="32" fill="url(#gIc)" stroke="#7a9fd8" stroke-width="2.400"/>
<g transform="translate(21,11.500)"><path d="M0 -9 V10 M-9 0 H9" stroke="#ffc838" stroke-width="2"/><path d="M0 -6 V7 M-6 0 H6 M-4 -4 L4 4 M-4 4 L4 -4" stroke="#e06a10" stroke-width="2"/><rect x="-2" y="-2" width="4" height="4" fill="#c74a00"/></g>
<rect x="1.500" y="22" width="10" height="11.500" fill="#fff" stroke="#7d9fd2" stroke-width="1.800"/><path d="M4 25 L8 30 M8 26 V30 H4.500" stroke="#8faad6" stroke-width="1.800" fill="none"/></svg>
<svg style="left:1574.6px;top:1364px" width="33" height="35" viewBox="0 0 33 35" ><rect x="1.200" y="1.200" width="30" height="32" fill="url(#gIc)" stroke="#7a9fd8" stroke-width="2.400"/>
<g transform="translate(21,11.500)"><path d="M0 -9 V10 M-9 0 H9" stroke="#ffc838" stroke-width="2"/><path d="M0 -6 V7 M-6 0 H6 M-4 -4 L4 4 M-4 4 L4 -4" stroke="#e06a10" stroke-width="2"/><rect x="-2" y="-2" width="4" height="4" fill="#c74a00"/></g>
<rect x="1.500" y="22" width="10" height="11.500" fill="#fff" stroke="#7d9fd2" stroke-width="1.800"/><path d="M4 25 L8 30 M8 26 V30 H4.500" stroke="#8faad6" stroke-width="1.800" fill="none"/></svg>
<svg style="left:1574.6px;top:1418px" width="33" height="35" viewBox="0 0 33 35" ><rect x="1.200" y="1.200" width="30" height="32" fill="url(#gIc)" stroke="#7a9fd8" stroke-width="2.400"/>
<g transform="translate(21,11.500)"><path d="M0 -9 V10 M-9 0 H9" stroke="#ffc838" stroke-width="2"/><path d="M0 -6 V7 M-6 0 H6 M-4 -4 L4 4 M-4 4 L4 -4" stroke="#e06a10" stroke-width="2"/><rect x="-2" y="-2" width="4" height="4" fill="#c74a00"/></g>
<rect x="1.500" y="22" width="10" height="11.500" fill="#fff" stroke="#7d9fd2" stroke-width="1.800"/><path d="M4 25 L8 30 M8 26 V30 H4.500" stroke="#8faad6" stroke-width="1.800" fill="none"/></svg>
<svg style="left:1270px;top:1418px" width="33" height="35" viewBox="0 0 33 35" ><rect x="1.200" y="1.200" width="30" height="32" fill="#fff" stroke="#6a9ada" stroke-width="2.400"/>
<rect x="4" y="4" width="24" height="12" fill="#e1f0fb"/><path d="M11 6 V12 M7 11 H13 M21 6 V12 M19 11 H26" stroke="#c6cdd6" stroke-width="1.800"/>
<path d="M8 13 Q16 4 24 13" fill="none" stroke="#7b2a8e" stroke-width="1.800" stroke-dasharray="2 1"/>
<rect x="4" y="14" width="4" height="8" fill="#c8501a"/><rect x="4" y="20" width="8" height="10" fill="#4aa818"/><rect x="4" y="16" width="3" height="5" fill="#c8501a"/>
<rect x="12" y="9" width="8" height="21" fill="#f59a30"/><rect x="14" y="6" width="4" height="4" fill="#d0561a"/><rect x="18.500" y="10" width="1.800" height="20" fill="#9a5a10"/><rect x="12" y="29" width="8" height="2" fill="#9a5a10"/>
<rect x="20.500" y="15" width="8" height="15" fill="#38b8f4"/><rect x="24.500" y="15" width="4" height="6" fill="#c8501a"/><rect x="4" y="29.500" width="24.500" height="1.500" fill="#2c7a10"/></svg>
<svg style="left:662px;top:1294px" width="33" height="31" viewBox="0 0 33 31" ><rect x="1.200" y="1.200" width="30" height="28" fill="#fff" stroke="#2a8de8" stroke-width="2.400"/><rect x="4.500" y="4.500" width="23.500" height="3.500" fill="#1d80e0"/>
<path d="M4.500 11.500 H9 M4.500 17 H9 M4.500 22.500 H9 M17 11.500 H26 M17 17 H26 M17 22.500 H26" stroke="#22b4f0" stroke-width="2"/><path d="M11.500 10 V24" stroke="#1d80e0" stroke-width="2.200"/><path d="M14 11.500 H16 M14 17 H16 M14 22.500 H16" stroke="#1d80e0" stroke-width="2"/></svg>
<svg style="left:2209px;top:323px" width="34" height="34" viewBox="0 0 34 34" ><rect x="2" y="5" width="25" height="27" fill="#f4cf85" stroke="#c39a58" stroke-width="1.500"/><path d="M2 32 H27" stroke="#8a6a30" stroke-width="1.500" stroke-dasharray="1.500 1"/>
<rect x="6.500" y="1.500" width="16" height="9" fill="#fff8e6" stroke="#f09a28" stroke-width="2.200"/><path d="M10 5.500 H19" stroke="#f09a28" stroke-width="2"/><path d="M6 10.500 H23" stroke="#7a4a18" stroke-width="1.800"/>
<path d="M14.500 11 V22" stroke="#f0a850" stroke-width="1.500"/><path d="M12 17 L14.500 21 L17 18" stroke="#e88a30" stroke-width="1.200" fill="none"/>
<path d="M23 12 L31.500 21 H27 V32 L19 32 L21 29 V21 H15.500 Z" fill="#55b81a" stroke="#3d9a0c" stroke-width="1"/><path d="M23 14 L27 19 M20 18 L23 15" stroke="#d9f5c0" stroke-width="1.500"/></svg>
<svg style="left:2207px;top:1117px" width="35" height="31" viewBox="0 0 35 31" ><path d="M17 2.500 L31.500 27 H2.500 Z" fill="#fdf3c8" stroke="#f3b030" stroke-width="3" stroke-linejoin="round"/><path d="M17 10 V18.500" stroke="#222" stroke-width="3.500"/><rect x="15.200" y="20.500" width="3.600" height="3.400" fill="#222"/></svg>
<svg style="left:2771px;top:327px" width="24" height="25" viewBox="0 0 24 25" ><path d="M10 1.500 H16.500 V5.500 H22 V14 L19 17 H14.500 L8.500 23 H4 L1.500 20.500 V16.500 L8 10 V3.500 Z" fill="#f4f9fe" stroke="#0b52b8" stroke-width="2.400" stroke-linejoin="round"/><rect x="12.800" y="6.500" width="4.400" height="4.400" fill="#0b52b8"/></svg>
<svg style="left:2771px;top:1119px" width="24" height="25" viewBox="0 0 24 25" ><path d="M10 1.500 H16.500 V5.500 H22 V14 L19 17 H14.500 L8.500 23 H4 L1.500 20.500 V16.500 L8 10 V3.500 Z" fill="#f4f9fe" stroke="#0b52b8" stroke-width="2.400" stroke-linejoin="round"/><rect x="12.800" y="6.500" width="4.400" height="4.400" fill="#0b52b8"/></svg>
<svg style="left:2106px;top:1295px" width="24" height="25" viewBox="0 0 24 25" ><path d="M10 1.500 H16.500 V5.500 H22 V14 L19 17 H14.500 L8.500 23 H4 L1.500 20.500 V16.500 L8 10 V3.500 Z" fill="#f4f9fe" stroke="#0b52b8" stroke-width="2.400" stroke-linejoin="round"/><rect x="12.800" y="6.500" width="4.400" height="4.400" fill="#0b52b8"/></svg>
<div class="t" style="left:2668px;top:1637px;font-size:53px;line-height:60px;font-weight:bold;color:#9b9b9b;letter-spacing:-5px;-webkit-text-stroke:2.5px #9b9b9b;transform-origin:0 0;transform:scaleX(0.84);">SAP</div>
<div class="t " style="left:2756.0px;top:1642.5px;font-size:19px;line-height:25px;color:#a9a9a9;letter-spacing:-0.64px;">Business</div>
<div class="t " style="left:2754.5px;top:1655.5px;font-size:30.5px;line-height:40px;color:#f59a23;letter-spacing:-0.61px;font-weight:bold;">One</div>
<svg style="left:2842px;top:1681px" width="26" height="26" viewBox="0 0 26 26" ><rect x="23.0" y="0.0" width="2.4" height="2.4" fill="#2a4a52"/><rect x="18.4" y="4.6" width="2.4" height="2.4" fill="#2a4a52"/><rect x="23.0" y="4.6" width="2.4" height="2.4" fill="#2a4a52"/><rect x="13.8" y="9.2" width="2.4" height="2.4" fill="#2a4a52"/><rect x="18.4" y="9.2" width="2.4" height="2.4" fill="#2a4a52"/><rect x="23.0" y="9.2" width="2.4" height="2.4" fill="#2a4a52"/><rect x="9.2" y="13.8" width="2.4" height="2.4" fill="#2a4a52"/><rect x="13.8" y="13.8" width="2.4" height="2.4" fill="#2a4a52"/><rect x="18.4" y="13.8" width="2.4" height="2.4" fill="#2a4a52"/><rect x="23.0" y="13.8" width="2.4" height="2.4" fill="#2a4a52"/><rect x="4.6" y="18.4" width="2.4" height="2.4" fill="#2a4a52"/><rect x="9.2" y="18.4" width="2.4" height="2.4" fill="#2a4a52"/><rect x="13.8" y="18.4" width="2.4" height="2.4" fill="#2a4a52"/><rect x="18.4" y="18.4" width="2.4" height="2.4" fill="#2a4a52"/><rect x="23.0" y="18.4" width="2.4" height="2.4" fill="#2a4a52"/><rect x="0.0" y="23.0" width="2.4" height="2.4" fill="#2a4a52"/><rect x="4.6" y="23.0" width="2.4" height="2.4" fill="#2a4a52"/><rect x="9.2" y="23.0" width="2.4" height="2.4" fill="#2a4a52"/><rect x="13.8" y="23.0" width="2.4" height="2.4" fill="#2a4a52"/><rect x="18.4" y="23.0" width="2.4" height="2.4" fill="#2a4a52"/><rect x="23.0" y="23.0" width="2.4" height="2.4" fill="#2a4a52"/><rect x="13.5" y="13.5" width="5" height="5" fill="#2a4a52"/></svg>
<svg style="left:2851px;top:840px" width="10" height="16" viewBox="0 0 10 16" ><rect x="0" y="0" width="2.5" height="2.5" fill="#b5bcc8"/><rect x="6" y="0" width="2.5" height="2.5" fill="#b5bcc8"/><rect x="0" y="6" width="2.5" height="2.5" fill="#b5bcc8"/><rect x="6" y="6" width="2.5" height="2.5" fill="#b5bcc8"/><rect x="0" y="12" width="2.5" height="2.5" fill="#b5bcc8"/><rect x="6" y="12" width="2.5" height="2.5" fill="#b5bcc8"/></svg>
<div style="position:absolute;left:2868px;top:0px;width:12px;height:1714px;background:#fff;"></div>
<div style="position:absolute;left:2870px;top:164px;width:4px;height:1546px;background:#b9b9b9;"></div>
<div style="position:absolute;left:2874px;top:0px;width:2px;height:1714px;background:#4a4a4a;"></div>
<div style="position:absolute;left:2876px;top:0px;width:4px;height:1714px;background:#eef5f5;"></div>
<div style="position:absolute;left:0px;top:1710px;width:2876px;height:4px;background:#b2b2b2;"></div>
<svg style="left:5px;top:1598px" width="47" height="42" viewBox="0 0 47 42"><path d="M46 0 C45 14 38 22 26 24 C12 25 4 30 0 40 L0 0 Z" fill="url(#gCol)"/><path d="M46 0 C45 14 38 22 26 24 C12 25 4 30 0 40" fill="none" stroke="#6d727b" stroke-width="1.6"/></svg>
<div style="position:absolute;left:4px;top:152px;width:1px;height:1488px;background:linear-gradient(#2a3352 0px,#2a3352 1450px,#555 1488px);"></div>
<div style="position:absolute;left:5px;top:152px;width:1px;height:104px;background:#8189a0;"></div>
<div style="position:absolute;left:5px;top:435px;width:1px;height:1200px;background:#8189a0;"></div>
<div style="position:absolute;left:3px;top:152px;width:1px;height:1488px;background:#d9dde2;"></div>
</body></html>
